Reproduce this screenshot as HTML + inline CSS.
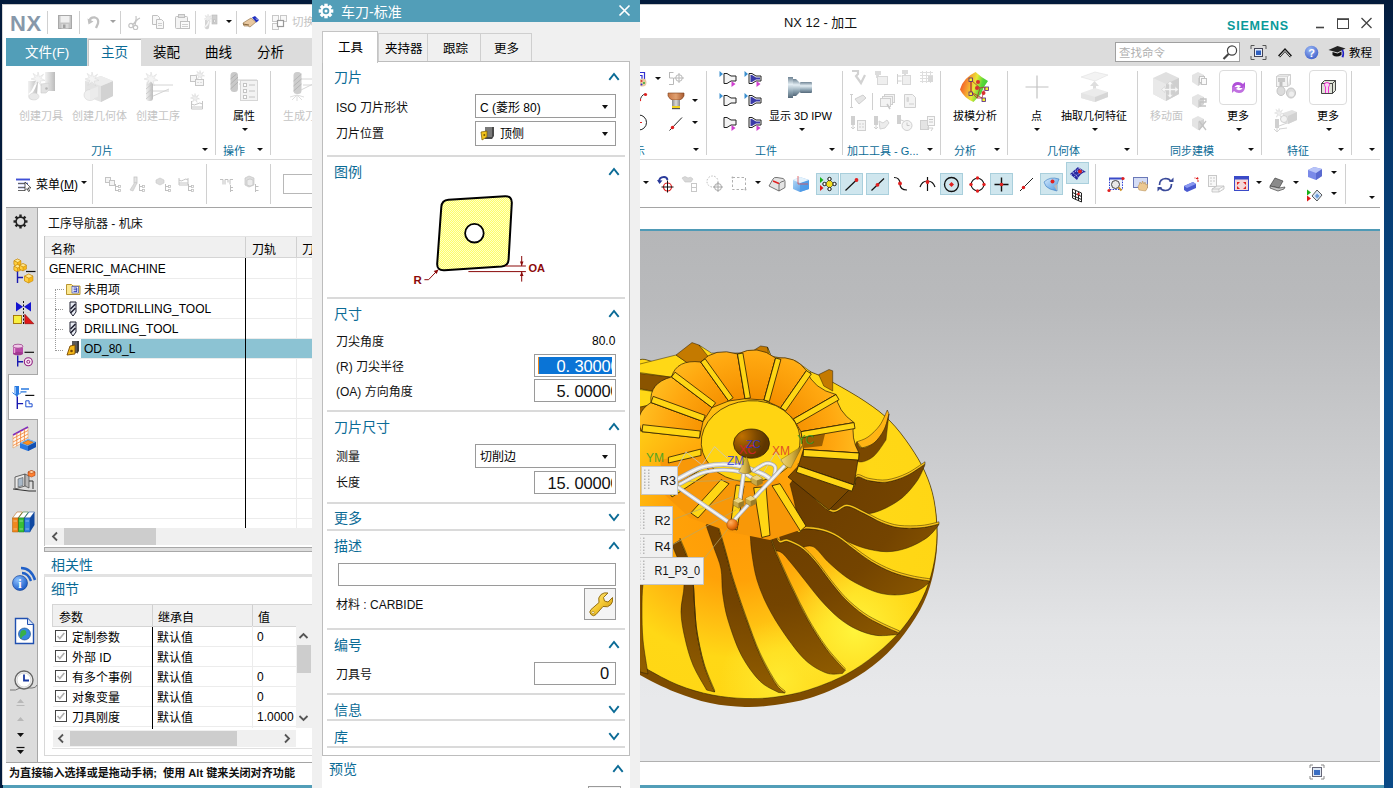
<!DOCTYPE html>
<html lang="zh-CN">
<head>
<meta charset="utf-8">
<title>NX 12 - 加工</title>
<style>
*{box-sizing:border-box;margin:0;padding:0}
html,body{width:1393px;height:788px;overflow:hidden}
body{position:relative;background:#031b3c;font-family:"Liberation Sans","Noto Sans CJK SC",sans-serif;font-size:12px;color:#000;line-height:1}
.a{position:absolute}
.t{position:absolute;white-space:nowrap;line-height:1}
.cj{margin-top:2px}
.la{margin-top:1px}
.sec.cj{margin-top:1px}
.blue{color:#0b6b96}
.dis{color:#c4c4c4}
.vsep{position:absolute;width:1px;background:#d0d0d0}
.hl{position:absolute;height:1px;background:#d4d4d4}
.dd{position:absolute;width:0;height:0;border-left:3px solid transparent;border-right:3px solid transparent;border-top:3.500px solid #111}
.dd.big{border-left-width:3.500px;border-right-width:3.500px;border-top-width:4px}
.box{position:absolute;border:1px solid #9a9a9a;background:#fff}
.sec{position:absolute;left:334px;font-size:14px;color:#0b6b96;white-space:nowrap;line-height:1}
.lbl{position:absolute;left:336px;font-size:12px;white-space:nowrap;line-height:1;color:#111}
.num{position:absolute;font-family:"Liberation Sans",sans-serif;font-size:16.5px;line-height:1;white-space:nowrap;letter-spacing:-0.17px}
.num i{display:inline-block;width:9px;font-style:normal;letter-spacing:0}
.tog{position:absolute;background:#cfe6ee;border:1px solid #a9cfdc}
</style>
</head>
<body>
<!-- desktop right strip -->
<div class="a" style="left:1384px;top:0;width:9px;height:788px;background:linear-gradient(180deg,#031b3c 0,#06386c 18%,#0a4f8f 50%,#0a4a86 100%)"></div>
<!-- main window -->
<div id="win" class="a" style="left:2px;top:4px;width:1382px;height:781px;background:#fff;border-top:1px solid #c9c9c9;border-left:1px solid #d8d8d8"></div>
<div class="a" style="left:3px;top:785px;width:1381px;height:3px;background:#529eb8"></div>

<!-- TITLE BAR -->
<div id="titlebar">
<div class="t la" style="left:10px;top:12px;font-size:22px;font-weight:bold;color:#8798aa;letter-spacing:0.5px">NX</div>
<div class="vsep" style="left:47px;top:11px;height:23px"></div>
<div class="vsep" style="left:79px;top:11px;height:23px"></div>
<div class="vsep" style="left:120px;top:11px;height:23px"></div>
<div class="vsep" style="left:195px;top:11px;height:23px"></div>
<div class="vsep" style="left:236px;top:11px;height:23px"></div>
<div class="vsep" style="left:265px;top:11px;height:23px"></div>
<div class="t cj" style="left:784px;top:15px;font-size:12.9px;color:#111">NX 12 - 加工</div>
<div class="t la" style="left:1227px;top:19px;font-size:12.5px;font-weight:bold;color:#0a9a9a;letter-spacing:0.8px">SIEMENS</div>
</div>

<!-- TAB BAR -->
<div class="a" style="left:6px;top:38px;width:1374px;height:28px;background:#dcdcdc"></div>
<div class="a" style="left:6px;top:38px;width:81px;height:28px;background:#529eb8"></div>
<div class="t cj" style="left:25px;top:44px;font-size:13.5px;color:#fff">文件(F)</div>
<div class="a" style="left:88px;top:39px;width:53px;height:27px;background:#fff;border-top:1px solid #b5b5b5;border-left:1px solid #c8c8c8"></div>
<div class="t blue cj" style="left:101px;top:44px;font-size:13.5px">主页</div>
<div class="t cj" style="left:153px;top:44px;font-size:13.5px">装配</div>
<div class="t cj" style="left:205px;top:44px;font-size:13.5px">曲线</div>
<div class="t cj" style="left:257px;top:44px;font-size:13.5px">分析</div>

<!--titlebar2-S--><svg class="a" style="left:58px;top:15px" width="15" height="15" viewBox="0 0 15 15"><rect x="0.500" y="0.500" width="13" height="13" fill="#c4c4c4" stroke="#a8a8a8"/><rect x="2.500" y="1" width="9" height="6.500" fill="#f0f0f0"/><rect x="3.500" y="9" width="7" height="4.500" fill="#d8d8d8"/><rect x="5" y="9.500" width="2.500" height="3.500" fill="#a0a0a0"/></svg>
<svg class="a" style="left:87px;top:15px" width="15" height="15" viewBox="0 0 15 15"><path d="M2 7q1-5 6-4.500q4 1 3 6l-2 4.500" fill="none" stroke="#c0c0c0" stroke-width="2.300"/><path d="M0.500 3.500l1 6l5-3z" fill="#c0c0c0"/></svg>
<div class="dd" style="left:109.5px;top:19.75px;border-top-color:#a0a0a0"></div>
<svg class="a" style="left:128px;top:15px" width="16" height="15" viewBox="0 0 16 15"><path d="M8 1q1 6-4 9M12 3q-5 2-5 8" fill="none" stroke="#c4c4c4" stroke-width="1.200"/><circle cx="3" cy="10.500" r="2.200" fill="none" stroke="#c4c4c4" stroke-width="1.200"/><circle cx="7.500" cy="12.500" r="2.200" fill="none" stroke="#c4c4c4" stroke-width="1.200"/></svg>
<svg class="a" style="left:151px;top:15px" width="15" height="15" viewBox="0 0 15 15"><path d="M1.500 0.500h5l2 2v7h-7z" fill="#f8f8f8" stroke="#c0c0c0"/><path d="M5.500 4.500h5l2 2v7h-7z" fill="#f8f8f8" stroke="#c0c0c0"/><path d="M7 8.500h4M7 10.500h4" stroke="#d0d0d0"/></svg>
<svg class="a" style="left:174px;top:14px" width="17" height="16" viewBox="0 0 17 16"><rect x="1.500" y="2.500" width="12" height="12" rx="1" fill="#f4f4f4" stroke="#c0c0c0"/><rect x="4.500" y="0.500" width="6" height="3" fill="#e0e0e0" stroke="#c0c0c0"/><rect x="6.500" y="7.500" width="9" height="7" fill="#fbfbfb" stroke="#c0c0c0"/><path d="M8 10.500h6M8 12.500h6" stroke="#d0d0d0"/></svg>
<svg class="a" style="left:203px;top:14px" width="17" height="17" viewBox="0 0 17 17"><rect x="9" y="1" width="5" height="9" fill="#d0d0d0" stroke="#b8b8b8" stroke-width="0.600"/><rect x="10.500" y="6" width="2" height="2" fill="#fff" stroke="#a8a8a8" stroke-width="0.500"/><path d="M2 6h5l-1 8q-1 2-3 1q-2-1-1-4z" fill="#d4d4d4"/><path d="M2 13q3-2 4-6" stroke="#f4f4f4" stroke-width="1.500" fill="none"/><path d="M5 0l0.800 2.500l2.500-1l-1.200 2.300l2.400 1l-2.600 0.600l0.500 2.600l-2-1.800l-1.800 2l0.200-2.700l-2.600-0.400l2.200-1.400l-1.400-2.200l2.500 0.800z" fill="#ececec" stroke="#cfcfcf" stroke-width="0.300"/></svg>
<div class="dd" style="left:225.5px;top:19.75px"></div>
<svg class="a" style="left:242px;top:15px" width="18" height="13" viewBox="0 0 18 13"><path d="M1 8l8-5l5 4l-6 5l-2-1l-4 0z" fill="#e8c8a0" stroke="#8a6a40" stroke-width="0.600"/><path d="M1 9l6 1" stroke="#6a4a20" stroke-width="0.800"/><path d="M10 2.500l3-1.500l4 4l-2.500 2.500z" fill="#2030c0"/><path d="M14 3.500l1.500 1.500" stroke="#fff" stroke-width="0.800"/></svg>
<svg class="a" style="left:271px;top:14px" width="17" height="17" viewBox="0 0 17 17"><rect x="1.500" y="1.500" width="6" height="6" fill="#f8f8f8" stroke="#c8c8c8"/><rect x="9.500" y="1.500" width="6" height="6" fill="#f8f8f8" stroke="#c8c8c8"/><rect x="1.500" y="9.500" width="6" height="6" fill="#f8f8f8" stroke="#c8c8c8"/><rect x="6.500" y="6.500" width="6" height="6" fill="#fff" stroke="#999" stroke-width="1.200"/></svg>
<div class="t dis cj" style="left:292px;top:15px;font-size:11.5px;">切换窗口</div>
<svg class="a" style="left:1314px;top:15px" width="62" height="16" viewBox="0 0 62 16"><path d="M2 12.500h8" stroke="#444" stroke-width="1.600"/><rect x="23.500" y="4" width="11" height="9.500" fill="none" stroke="#444" stroke-width="1"/><path d="M23 4.200h12" stroke="#444" stroke-width="1.600"/><path d="M47.500 3l10 10M57.500 3l-10 10" stroke="#444" stroke-width="1.300"/></svg>
<div class="box" style="left:1115px;top:42px;width:125px;height:20px;border-color:#a0a0a0"></div>
<div class="t cj" style="left:1119px;top:46px;font-size:11.5px;color:#b0b0b0">查找命令</div>
<svg class="a" style="left:1222px;top:44px" width="17" height="17" viewBox="0 0 17 17"><circle cx="10" cy="6.500" r="4.600" fill="#fff" stroke="#444" stroke-width="1.200"/><path d="M6.500 10L1.500 15" stroke="#444" stroke-width="2.200"/></svg>
<svg class="a" style="left:1250px;top:44px" width="17" height="17" viewBox="0 0 17 17"><path d="M1 5V1.500h3.500M12.500 1.500H16V5M16 12v3.500h-3.500M4.500 15.500H1V12" fill="none" stroke="#555" stroke-width="1"/><rect x="4.500" y="4.500" width="8" height="8" fill="#e4ecf8" stroke="#445" stroke-width="1"/><rect x="6" y="6.500" width="5" height="4.500" fill="#2f5fc0"/></svg>
<svg class="a" style="left:1277px;top:46px" width="16" height="13" viewBox="0 0 16 13"><path d="M2 10.500L8 4L14 10.500" fill="none" stroke="#111" stroke-width="2.600"/><path d="M2.500 10.500L8 4.500L13.500 10.500" fill="none" stroke="#fff" stroke-width="0.900"/></svg>
<svg class="a" style="left:1304px;top:45px" width="15" height="15" viewBox="0 0 15 15"><defs><radialGradient id="gH" cx="0.400" cy="0.300" r="0.800"><stop offset="0" stop-color="#9ab8f4"/><stop offset="1" stop-color="#3a5ac8"/></radialGradient></defs><circle cx="7.500" cy="7.500" r="6.800" fill="url(#gH)"/><text x="7.500" y="11.500" font-size="11" font-weight="bold" fill="#fff" text-anchor="middle" font-family="Liberation Sans, sans-serif">?</text></svg>
<svg class="a" style="left:1328px;top:45px" width="19" height="14" viewBox="0 0 19 14"><path d="M0.500 5l9-4l8 2.500l-8 4z" fill="#222"/><path d="M4.500 7v3q4 3 9 0v-3.500l-4 2z" fill="#111"/><path d="M15 4.500q2 3 0.500 8l-2-0.500q2-4 0-7z" fill="#2020c8"/></svg>
<div class="t cj" style="left:1349px;top:46px;font-size:11.5px;">教程</div><!--titlebar2-E-->

<!-- RIBBON placeholder -->
<!--ribbon-S--><svg class="a" style="left:27px;top:71px" width="30" height="31" viewBox="0 0 30 31"><defs><linearGradient id="gA" x1="0" x2="1"><stop offset="0" stop-color="#f2f2f2"/><stop offset="1" stop-color="#bcbcbc"/></linearGradient></defs><rect x="18" y="1" width="10" height="19" fill="url(#gA)"/><path d="M14 13l8-1v7l-3 3h-5z" fill="#e2e2e2" stroke="#cfcfcf" stroke-width="0.600"/><circle cx="19.500" cy="17.500" r="1.300" fill="#b5b5b5"/><path d="M1 10h10l-1 14q1 5-4 5q-5 0-5-4z" fill="url(#gA)"/><path d="M2 24q4-3 7-12" stroke="#fff" stroke-width="2.200" fill="none"/><ellipse cx="7" cy="25.500" rx="5" ry="3.500" fill="#e9e9e9" stroke="#d0d0d0" stroke-width="0.500"/><path d="M11 1L12.4 5.9L16.6 3.1L13.8 7.3L18 9.4L13.1 10.1L14.5 15L11 10.8L6.8 14.3L8.9 9.4L4 8L8.2 6.6L6.1 2.4L10.3 5.2Z" fill="#f4f4f4" stroke="#d0d0d0" stroke-width="0.400"/></svg>
<div class="t dis cj" style="left:19px;top:109px;font-size:11px;">创建刀具</div>
<svg class="a" style="left:83px;top:71px" width="32" height="32" viewBox="0 0 32 32"><path d="M2 10l16-5l12 5v15l-12 6l-16-6z" fill="#e3e3e3"/><path d="M18 15l12-5v15l-12 6z" fill="#d2d2d2"/><path d="M2 10l16 5l12-5l-12-5z" fill="#ededed"/><ellipse cx="7" cy="24" rx="6" ry="5.500" fill="#f0f0f0" stroke="#d5d5d5" stroke-width="0.600"/><path d="M7 18.500l8-3v10l-8 4z" fill="#ebebeb"/><path d="M9 1L10.4 5.9L14.6 3.1L11.8 7.3L16 9.4L11.1 10.1L12.5 15L9 10.8L4.8 14.3L6.9 9.4L2 8L6.2 6.6L4.1 2.4L8.3 5.2Z" fill="#f4f4f4" stroke="#d0d0d0" stroke-width="0.400"/></svg>
<div class="t dis cj" style="left:72px;top:109px;font-size:11px;">创建几何体</div>
<svg class="a" style="left:143px;top:71px" width="32" height="32" viewBox="0 0 32 32"><path d="M10 14h20M10 20h16M8 26l18-8" stroke="#d4d4d4" stroke-width="1"/><rect x="3" y="10" width="7" height="20" rx="3" fill="url(#gA)"/><path d="M3 28l7-6M3 23l7-6M3 18l7-6" stroke="#c4c4c4" stroke-width="0.800"/><path d="M8 1L9.4 5.9L13.6 3.1L10.8 7.3L15 9.4L10.1 10.1L11.5 15L8 10.8L3.8 14.3L5.9 9.4L1 8L5.2 6.6L3.1 2.4L7.3 5.2Z" fill="#f4f4f4" stroke="#d0d0d0" stroke-width="0.400"/></svg>
<div class="t dis cj" style="left:136px;top:109px;font-size:11px;">创建工序</div>
<svg class="a" style="left:189px;top:70px" width="16" height="17" viewBox="0 0 16 17"><rect x="1.500" y="5.500" width="6" height="6" fill="#f6f6f6" stroke="#c6c6c6"/><rect x="6.500" y="9.500" width="8" height="6" fill="#f6f6f6" stroke="#c6c6c6"/><path d="M8.500 12.500h1M11.500 12.500h1" stroke="#c6c6c6"/><path d="M11 0.5L11.9 3.7L14.6 1.9L12.8 4.5L15.5 5.9L12.3 6.3L13.2 9.5L11 6.8L8.3 9.1L9.7 5.9L6.5 5L9.2 4.1L7.8 1.4L10.6 3.2Z" fill="#eee" stroke="#d0d0d0" stroke-width="0.400"/></svg>
<svg class="a" style="left:189px;top:93px" width="16" height="17" viewBox="0 0 16 17"><path d="M2.500 8v8h11v-8M2.500 11q2.800 2 5.500 0q2.800-2 5.500 0M2.500 14h11" fill="none" stroke="#c6c6c6"/><path d="M6 0.5L6.9 3.7L9.6 1.9L7.8 4.5L10.5 5.9L7.3 6.3L8.2 9.5L6 6.8L3.3 9.1L4.7 5.9L1.5 5L4.2 4.1L2.9 1.4L5.5 3.2Z" fill="#eee" stroke="#d0d0d0" stroke-width="0.400"/></svg>
<div class="t blue cj" style="left:91px;top:144px;font-size:11px;">刀片</div>
<div class="dd" style="left:201.5px;top:147.75px"></div>
<div class="vsep" style="left:215px;top:71px;height:84px"></div>
<svg class="a" style="left:229px;top:71px" width="31" height="31" viewBox="0 0 31 31"><path d="M8 9h20M10 13h18" stroke="#d0d0d0"/><rect x="11.500" y="9.500" width="17" height="20" fill="#f3f3f3" stroke="#d6d6d6"/><rect x="14.500" y="12.500" width="3" height="3" fill="#fff" stroke="#c4c4c4"/><rect x="14.500" y="18.500" width="3" height="3" fill="#fff" stroke="#c4c4c4"/><rect x="14.500" y="24.500" width="3" height="3" fill="#fff" stroke="#c4c4c4"/><path d="M20 14h6M20 20h6M20 26h6" stroke="#c4c4c4"/><rect x="1.500" y="1" width="7.500" height="20" rx="3.500" fill="#c9c9c9"/><path d="M1.500 18l7.500-7M1.500 13l7.500-7M1.500 8l6-5" stroke="#aeaeae" stroke-width="0.900"/></svg>
<div class="t cj" style="left:233px;top:109px;font-size:11px;">属性</div>
<div class="dd" style="left:241.5px;top:127.75px"></div>
<div class="t blue cj" style="left:223px;top:144px;font-size:11px;">操作</div>
<div class="dd" style="left:256.5px;top:147.75px"></div>
<div class="vsep" style="left:270px;top:71px;height:84px"></div>
<svg class="a" style="left:289px;top:71px" width="26" height="32" viewBox="0 0 26 32"><path d="M12 8h14M14 14h12M10 20l16-8" stroke="#d6d6d6"/><rect x="4.500" y="1" width="8" height="22" rx="3.500" fill="#cdcdcd"/><path d="M4.500 20l8-7M4.500 15l8-7M4.500 10l8-7" stroke="#b3b3b3" stroke-width="0.900"/><path d="M8 24l-7 2M8 24l-5 5M8 24l0 6M8 24l5 5M8 24l7 2" stroke="#dedede" stroke-width="1"/></svg>
<div class="t dis cj" style="left:283px;top:109px;font-size:11px;">生成刀轨</div>
<svg class="a" style="left:640px;top:70px" width="8" height="18" viewBox="0 0 8 18"><path d="M0 2.500h4.500v9M0 5.500h2v6" fill="none" stroke="#3030d0" stroke-width="1.200"/><circle cx="2.500" cy="12.500" r="4" fill="#e8c9a0"/><circle cx="1.500" cy="11" r="1" fill="#d33"/><circle cx="4" cy="13" r="1" fill="#3a3"/><circle cx="1.500" cy="14.500" r="1" fill="#33c"/></svg>
<div class="dd" style="left:654.5px;top:76.75px"></div>
<svg class="a" style="left:668px;top:71px" width="17" height="15" viewBox="0 0 17 15"><path d="M1 1.500h4.500M1.500 1.500v5.500h4v6.500h-4.500M11 2v10M6 7h10" fill="none" stroke="#b8b8b8" stroke-width="1"/><circle cx="11" cy="7" r="3.300" fill="none" stroke="#b8b8b8"/></svg>
<svg class="a" style="left:640px;top:92px" width="8" height="12" viewBox="0 0 8 12"><path d="M0 9q1-6 5-7" fill="none" stroke="#333" stroke-width="1"/><circle cx="5.500" cy="2.500" r="1.600" fill="#e02020"/><circle cx="0" cy="8" r="1.200" fill="#e02020"/></svg>
<svg class="a" style="left:667px;top:92px" width="18" height="18" viewBox="0 0 18 18"><defs><linearGradient id="gB" x1="0" x2="1"><stop offset="0" stop-color="#c87848"/><stop offset="0.500" stop-color="#e0a070"/><stop offset="1" stop-color="#a85a30"/></linearGradient><linearGradient id="gC" x1="0" x2="1"><stop offset="0" stop-color="#8a8a8a"/><stop offset="0.500" stop-color="#d8d8d8"/><stop offset="1" stop-color="#8a8a8a"/></linearGradient></defs><path d="M1 1h16v3q-2 4-5 4h-6q-3 0-5-4z" fill="url(#gB)" stroke="#7a3c18" stroke-width="0.600"/><rect x="5" y="8" width="8" height="6" fill="url(#gC)"/><rect x="5" y="14" width="8" height="2" fill="#f2d21a"/><rect x="5" y="16" width="8" height="1.200" fill="#555"/></svg>
<div class="dd" style="left:691.5px;top:98.75px"></div>
<svg class="a" style="left:640px;top:114px" width="8" height="18" viewBox="0 0 8 18"><circle cx="-1" cy="8.500" r="7.500" fill="none" stroke="#222" stroke-width="1"/><path d="M-2 8.500h4" stroke="#e02020"/></svg>
<svg class="a" style="left:668px;top:116px" width="16" height="16" viewBox="0 0 16 16"><path d="M1.500 14.500L14 1.500" stroke="#222" stroke-width="1"/><circle cx="4.500" cy="11.500" r="1.700" fill="#e02020"/></svg>
<div class="dd" style="left:691.5px;top:120.75px"></div>
<div class="t blue cj" style="left:634px;top:144px;font-size:11px;clip-path:inset(0 0 0 6px)">示</div>
<div class="dd" style="left:692.5px;top:147.75px"></div>
<div class="vsep" style="left:706px;top:71px;height:84px"></div>
<svg class="a" style="left:719px;top:70px" width="18" height="18" viewBox="0 0 18 18"><path d="M5 3.500h3l4 2.500h5v5h-5l-4 2.500h-3z" fill="#f4f4f4" stroke="#222" stroke-width="1"/><path d="M0.500 1l3.500 3l-3.500 3z" fill="#3a8fd0"/><path d="M12.500 11l4 3l-4 3z" fill="#d040d0"/></svg>
<svg class="a" style="left:744px;top:70px" width="18" height="18" viewBox="0 0 18 18"><path d="M5 3.500h3l4 2.500h5v5h-5l-4 2.500h-3z" fill="#f4f4f4" stroke="#222" stroke-width="1"/><path d="M6.500 5h1.500l4 2.500h4v2h-4l-4 2.500h-1.500z" fill="#3a3aa8"/><path d="M0.500 1l3.500 3l-3.500 3z" fill="#3a8fd0"/><path d="M12.500 11l4 3l-4 3z" fill="#d040d0"/></svg>
<svg class="a" style="left:719px;top:92px" width="18" height="18" viewBox="0 0 18 18"><path d="M5 3.500h3l4 2.500h5v5h-5l-4 2.500h-3z" fill="#f4f4f4" stroke="#222" stroke-width="1"/><path d="M0.500 1l3.500 3l-3.500 3z" fill="#3a8fd0"/></svg>
<svg class="a" style="left:744px;top:92px" width="18" height="18" viewBox="0 0 18 18"><path d="M5 3.500h3l4 2.500h5v5h-5l-4 2.500h-3z" fill="#f4f4f4" stroke="#222" stroke-width="1"/><path d="M6.500 5h1.500l4 2.500h4v2h-4l-4 2.500h-1.500z" fill="#3a3aa8"/><path d="M0.500 1l3.500 3l-3.500 3z" fill="#3a8fd0"/></svg>
<svg class="a" style="left:719px;top:114px" width="18" height="18" viewBox="0 0 18 18"><path d="M5 3.500h3l4 2.500h5v5h-5l-4 2.500h-3z" fill="#f4f4f4" stroke="#222" stroke-width="1"/><path d="M12.500 11l4 3l-4 3z" fill="#d040d0"/></svg>
<svg class="a" style="left:744px;top:114px" width="18" height="18" viewBox="0 0 18 18"><path d="M5 3.500h3l4 2.500h5v5h-5l-4 2.500h-3z" fill="#f4f4f4" stroke="#222" stroke-width="1"/><path d="M6.500 5h1.500l4 2.500h4v2h-4l-4 2.500h-1.500z" fill="#3a3aa8"/><path d="M12.500 11l4 3l-4 3z" fill="#d040d0"/></svg>
<svg class="a" style="left:787px;top:76px" width="27" height="24" viewBox="0 0 27 24"><defs><linearGradient id="gD" x1="0" y1="0" x2="0" y2="1"><stop offset="0" stop-color="#6f8494"/><stop offset="0.350" stop-color="#e4eef4"/><stop offset="0.700" stop-color="#8fa5b3"/><stop offset="1" stop-color="#55697a"/></linearGradient></defs><rect x="1" y="1" width="5" height="21" fill="url(#gD)"/><path d="M6 3h3q3 3 4 4v9q-1 1-4 4h-3z" fill="url(#gD)"/><rect x="13" y="6" width="12" height="11" rx="1" fill="url(#gD)"/></svg>
<div class="t cj" style="left:769px;top:109px;font-size:11px;">显示 3D IPW</div>
<div class="dd" style="left:798.5px;top:127.75px"></div>
<div class="t blue cj" style="left:755px;top:144px;font-size:11px;">工件</div>
<div class="dd" style="left:828.5px;top:147.75px"></div>
<div class="vsep" style="left:842px;top:71px;height:84px"></div>
<svg class="a" style="left:850px;top:70px" width="17" height="17" viewBox="0 0 17 17"><path d="M2 1h6v3l-2 2l5 7l4-8" fill="none" stroke="#d2d2d2" stroke-width="2.200"/></svg>
<svg class="a" style="left:873px;top:70px" width="17" height="17" viewBox="0 0 17 17"><path d="M2 1h6v4h-2v3h-3v-3h-1z" fill="#dcdcdc"/><rect x="4.500" y="6.500" width="10" height="8" fill="#efefef" stroke="#d8d8d8"/></svg>
<svg class="a" style="left:896px;top:70px" width="17" height="17" viewBox="0 0 17 17"><path d="M6 0h6v4h-2v3h-2v-3h-2z" fill="#dcdcdc"/><rect x="6.500" y="5.500" width="8" height="9" fill="#efefef" stroke="#d8d8d8"/><path d="M1.500 4v10M1.500 6h4M1.500 11h4" stroke="#d0d0d0"/></svg>
<svg class="a" style="left:919px;top:70px" width="17" height="17" viewBox="0 0 17 17"><path d="M1 2.500h13M1 5.500h13M1 8.500h13M1 11.500h13M3.500 1v12M7.500 1v12M11.500 1v12" stroke="#dedede"/><rect x="9" y="6" width="5" height="6" fill="#d8d8d8"/></svg>
<svg class="a" style="left:850px;top:93px" width="17" height="17" viewBox="0 0 17 17"><path d="M1.500 1v14M0 1.500h3M0 14.500h3" stroke="#cfcfcf"/><path d="M5 6l8-4l3 3l-7 6z" fill="#e6e6e6" stroke="#cfcfcf"/></svg>
<div class="vsep" style="left:872px;top:93px;height:17px"></div>
<svg class="a" style="left:879px;top:93px" width="17" height="17" viewBox="0 0 17 17"><rect x="5.500" y="1.500" width="10" height="8" fill="#f3f3f3" stroke="#d0d0d0"/><rect x="3.500" y="3.500" width="10" height="8" fill="#f3f3f3" stroke="#d0d0d0"/><rect x="1.500" y="5.500" width="10" height="8" fill="#f3f3f3" stroke="#d0d0d0"/><path d="M8 11l3 5" stroke="#c8c8c8" stroke-width="1.500"/></svg>
<svg class="a" style="left:903px;top:93px" width="17" height="17" viewBox="0 0 17 17"><path d="M1.500 1.500h8l3 3v10h-11z" fill="#f3f3f3" stroke="#d0d0d0"/><rect x="3.500" y="4" width="2.500" height="5" rx="1" fill="#d8d8d8"/><path d="M6 11h5" stroke="#cfcfcf"/></svg>
<svg class="a" style="left:850px;top:115px" width="17" height="17" viewBox="0 0 17 17"><rect x="1" y="1" width="4" height="9" fill="#d0d0d0"/><path d="M3 10v3M1 12l2 2l2-2" stroke="#d0d0d0" fill="none"/><rect x="7.500" y="5.500" width="8" height="10" fill="#f3f3f3" stroke="#d0d0d0"/><path d="M9 9h2M12 9h2M9 12h2M12 12h2" stroke="#cfcfcf"/></svg>
<svg class="a" style="left:873px;top:115px" width="17" height="17" viewBox="0 0 17 17"><rect x="1" y="1" width="4" height="9" fill="#d0d0d0"/><path d="M3 10v3M1 12l2 2l2-2" stroke="#d0d0d0" fill="none"/><path d="M6 6l4 2l4-3l2 3l-4 5l-5 1z" fill="#ececec" stroke="#d4d4d4"/></svg>
<svg class="a" style="left:896px;top:115px" width="17" height="17" viewBox="0 0 17 17"><rect x="1" y="0" width="4" height="9" fill="#d0d0d0"/><path d="M5 5l5 2" stroke="#d0d0d0"/><circle cx="11" cy="10.500" r="5" fill="#f3f3f3" stroke="#d0d0d0"/><path d="M11 7.500v3h2.500" stroke="#c8c8c8" fill="none"/></svg>
<svg class="a" style="left:919px;top:115px" width="17" height="17" viewBox="0 0 17 17"><rect x="1.500" y="5.500" width="8" height="9" fill="#e4e4e4" stroke="#cfcfcf"/><rect x="8.500" y="1.500" width="7" height="9" fill="#f7f7f7" stroke="#cfcfcf"/><path d="M10 4.500h4M10 7h4" stroke="#c8c8c8"/><path d="M8 13h6l-2 3" fill="none" stroke="#d0d0d0"/></svg>
<div class="t blue cj" style="left:847px;top:144px;font-size:11px;">加工工具 - G...</div>
<div class="dd" style="left:926.5px;top:147.75px"></div>
<div class="vsep" style="left:940px;top:71px;height:84px"></div>
<svg class="a" style="left:958px;top:71px" width="34" height="32" viewBox="0 0 34 32"><defs><linearGradient id="gE" x1="0" y1="0.300" x2="1" y2="0.600"><stop offset="0" stop-color="#f04a28"/><stop offset="0.300" stop-color="#f6a030"/><stop offset="0.520" stop-color="#e8e838"/><stop offset="0.750" stop-color="#58d838"/><stop offset="1" stop-color="#38c838"/></linearGradient></defs><path d="M17.600 1Q24 7 30 10Q25 16 23 23L15.500 31Q6 27 2 18.500Q5 7 17.600 1Z" fill="url(#gE)"/><path d="M13 9l9 8l-3 10l-6-6zM13 9v12M22 17l5-1l-3 11l-5 0M13 21l11 6" fill="none" stroke="#b03030" stroke-width="0.800"/><circle cx="20" cy="11" r="2" fill="#d83030"/><circle cx="19" cy="17" r="2" fill="#d83030"/><circle cx="25.500" cy="22" r="2" fill="#d83030"/><g fill="#f4f428" stroke="#502080" stroke-width="0.800"><rect x="11" y="7" width="3.500" height="3.500"/><rect x="11" y="21" width="3.500" height="3.500"/><rect x="27" y="16" width="3.500" height="3.500"/><rect x="24" y="27" width="3.500" height="3.500"/></g></svg>
<div class="t cj" style="left:953px;top:109px;font-size:11px;">拔模分析</div>
<div class="dd" style="left:972.5px;top:127.75px"></div>
<div class="t blue cj" style="left:954px;top:144px;font-size:11px;">分析</div>
<div class="dd" style="left:993.5px;top:147.75px"></div>
<div class="vsep" style="left:1007px;top:71px;height:84px"></div>
<svg class="a" style="left:1025px;top:75px" width="24" height="24" viewBox="0 0 24 24"><path d="M12 0.500v23M0.500 12h23" stroke="#c2c2c2" stroke-width="1.200"/></svg>
<div class="t cj" style="left:1031px;top:109px;font-size:11px;">点</div>
<div class="dd" style="left:1033.5px;top:127.75px"></div>
<svg class="a" style="left:1080px;top:71px" width="29" height="32" viewBox="0 0 29 32"><path d="M1 6l14-5l13 3l-13 6z" fill="#f3f3f3" stroke="#e0e0e0" stroke-width="0.600"/><path d="M14.500 10l-4.500 5h3v6h3v-6h3z" fill="#dedede"/><path d="M1 22l14-5l13 4v5l-13 5l-14-4z" fill="#ebebeb"/><path d="M15 26l13-5v5l-13 5z" fill="#d6d6d6"/><path d="M1 22l14 4v5l-14-4z" fill="#e4e4e4"/></svg>
<div class="t cj" style="left:1061px;top:109px;font-size:11px;">抽取几何特征</div>
<div class="dd" style="left:1091.5px;top:127.75px"></div>
<div class="t blue cj" style="left:1047px;top:144px;font-size:11px;">几何体</div>
<div class="dd" style="left:1123.5px;top:147.75px"></div>
<div class="vsep" style="left:1137px;top:71px;height:84px"></div>
<svg class="a" style="left:1151px;top:71px" width="32" height="32" viewBox="0 0 32 32"><path d="M15 1l13 6v16l-13 7l-13-7v-16z" fill="#e0e0e0"/><path d="M15 13l13-6v16l-13 7z" fill="#cfcfcf"/><path d="M2 7l13 6v17l-13-7z" fill="#e9e9e9"/><path d="M19 10l3 3.500h-2v4h4v-2l3.500 3l-3.500 3v-2h-4v4h2l-3 3.500l-3-3.500h2v-4h-4v2l-3.500-3l3.500-3v2h4v-4h-2z" fill="#f6f6f6" stroke="#d2d2d2" stroke-width="0.700"/></svg>
<div class="t dis cj" style="left:1150px;top:109px;font-size:11px;">移动面</div>
<svg class="a" style="left:1191px;top:71px" width="17" height="17" viewBox="0 0 17 17"><path d="M7 1l6 3v7l-6 4l-6-4v-7z" fill="#e4e4e4"/><path d="M7 7l6-3v7l-6 4z" fill="#d2d2d2"/><rect x="8.500" y="5.500" width="5" height="6" fill="#fafafa" stroke="#c4c4c4"/><rect x="10.500" y="7.500" width="5" height="6" fill="#fafafa" stroke="#c4c4c4"/></svg>
<svg class="a" style="left:1191px;top:93px" width="17" height="17" viewBox="0 0 17 17"><path d="M7 1l6 3v7l-6 4l-6-4v-7z" fill="#e4e4e4"/><path d="M7 7l6-3v7l-6 4z" fill="#d2d2d2"/><path d="M9 6h6v3h-6v4h6" fill="none" stroke="#c4c4c4" stroke-width="1.400"/></svg>
<svg class="a" style="left:1191px;top:115px" width="17" height="17" viewBox="0 0 17 17"><path d="M7 1l6 3v7l-6 4l-6-4v-7z" fill="#e4e4e4"/><path d="M7 7l6-3v7l-6 4z" fill="#d2d2d2"/><path d="M8 6l7 9M15 6l-7 9" stroke="#c4c4c4" stroke-width="1.300"/></svg>
<div class="a" style="left:1219px;top:70px;width:38px;height:35px;border:1px solid #dcdcdc;border-radius:4px;background:#fff"></div>
<svg class="a" style="left:1230px;top:80px" width="17" height="15" viewBox="0 0 17 15"><path d="M2 7q1-5 6-5q3 0 5 2l2-2v6h-6l2-2q-2-1.500-4-1q-3 1-3 4z" fill="#b050d8"/><path d="M15 8q-1 5-6 5q-3 0-5-2l-2 2v-6h6l-2 2q2 1.500 4 1q3-1 3-4z" fill="#c070e0"/></svg>
<div class="t cj" style="left:1227px;top:109px;font-size:11px;">更多</div>
<div class="dd" style="left:1235.5px;top:127.75px"></div>
<div class="t blue cj" style="left:1170px;top:144px;font-size:11px;">同步建模</div>
<div class="dd" style="left:1247.5px;top:147.75px"></div>
<div class="vsep" style="left:1261px;top:71px;height:84px"></div>
<svg class="a" style="left:1273px;top:74px" width="25" height="25" viewBox="0 0 25 25"><rect x="3.500" y="2.500" width="11" height="10" fill="#f2f2f2" stroke="#d0d0d0"/><path d="M3.500 2.500l3-2h11l-3 2M17.500 0.500v10l-3 2" fill="#e6e6e6" stroke="#d0d0d0"/><rect x="5" y="4" width="7" height="4" fill="#c8c8c8"/><path d="M8 8v4" stroke="#c0c0c0" stroke-width="3"/><ellipse cx="8" cy="17" rx="4" ry="4.500" fill="#dcdcdc" stroke="#c4c4c4"/><ellipse cx="18" cy="19" rx="4.500" ry="5" fill="#dcdcdc" stroke="#c4c4c4"/><circle cx="18.500" cy="20" r="2.500" fill="#efefef"/></svg>
<svg class="a" style="left:1273px;top:108px" width="25" height="25" viewBox="0 0 25 25"><path d="M10 5l9-3l5 2v8l-9 4l-5-2z" fill="#e2e2e2"/><path d="M15 8l9-4v8l-9 4z" fill="#d2d2d2"/><circle cx="11" cy="11" r="3.500" fill="#f3f3f3" stroke="#d0d0d0"/><path d="M6 0.5L6.9 3.7L9.6 1.9L7.8 4.5L10.5 5.9L7.3 6.3L8.2 9.5L6 6.8L3.3 9.1L4.7 5.9L1.5 5L4.2 4.1L2.9 1.4L5.5 3.2Z" fill="#efefef" stroke="#d0d0d0" stroke-width="0.400"/><rect x="2" y="11" width="4" height="9" fill="#d0d0d0"/><path d="M4 20v3M1 21l3 3l3-3M6 18l8-3M6 21l8-1" stroke="#d4d4d4" fill="none"/></svg>
<div class="a" style="left:1309px;top:70px;width:38px;height:35px;border:1px solid #dcdcdc;border-radius:4px;background:#fff"></div>
<svg class="a" style="left:1320px;top:79px" width="17" height="17" viewBox="0 0 17 17"><path d="M1.500 4.500l3-3h11v10l-3 3h-11z" fill="#dfe3d8" stroke="#333" stroke-width="0.900"/><path d="M1.500 4.500h11v10M12.500 4.500l3-3" fill="none" stroke="#333" stroke-width="0.900"/><path d="M5.500 14v-6q-1-1-1-2.500q0-2 2.500-2t2.500 2q0 1.500-1 2.500v6" fill="#f6d6f0" stroke="#f020d0" stroke-width="0.900"/></svg>
<div class="t cj" style="left:1317px;top:109px;font-size:11px;">更多</div>
<div class="dd" style="left:1325.5px;top:127.75px"></div>
<div class="t blue cj" style="left:1287px;top:144px;font-size:11px;">特征</div>
<div class="dd" style="left:1337.5px;top:147.75px"></div>
<div class="vsep" style="left:1351px;top:71px;height:84px"></div>
<div class="dd" style="left:1368.5px;top:147.75px"></div><!--ribbon-E-->
<div class="hl" style="left:6px;top:159px;width:1374px;background:#d9d9d9"></div>
<!-- TOOLBAR2 placeholder -->
<!--tb2-S--><svg class="a" style="left:15px;top:177px" width="18" height="15" viewBox="0 0 18 15"><path d="M1 2.500h14M3 6.500h10M3 10.500h8" stroke="#5a6ad0" stroke-width="1.300"/><path d="M1 2.500h14" stroke="#4050d8" stroke-width="1.600"/><path d="M3 6.500h9M3 10.500h7M3 13.500h7" stroke="#666" stroke-width="1"/><path d="M10 5l0 8.500l2-2l1.500 3l1.200-0.600l-1.500-3h2.800z" fill="#fff" stroke="#333" stroke-width="0.800"/></svg>
<div class="t cj" style="left:36px;top:177px;font-size:12px;">菜单(<u>M</u>)</div>
<div class="dd" style="left:80.5px;top:181.25px"></div>
<div class="vsep" style="left:92px;top:164px;height:40px"></div>
<svg class="a" style="left:105px;top:176px" width="17" height="17" viewBox="0 0 17 17"><rect x="0.500" y="1.500" width="5" height="5" fill="#f4f4f4" stroke="#c4c4c4"/><rect x="4.500" y="4.500" width="5" height="5" fill="#f4f4f4" stroke="#c4c4c4"/><path d="M10.500 8v7M10.500 10.500h3M10.500 14.500h3" stroke="#c0c0c0" fill="none"/><rect x="13.500" y="9.500" width="2" height="2" fill="#fff" stroke="#c0c0c0" stroke-width="0.800"/><rect x="13.500" y="13.500" width="2" height="2" fill="#fff" stroke="#c0c0c0" stroke-width="0.800"/></svg>
<svg class="a" style="left:129px;top:176px" width="17" height="17" viewBox="0 0 17 17"><rect x="5" y="1" width="3" height="6" fill="#e6e6e6" stroke="#c4c4c4" stroke-width="0.800"/><path d="M1 14l5-8l2 1l-4 8z" fill="#dcdcdc" stroke="#c4c4c4" stroke-width="0.600"/><path d="M10.500 8v7M10.500 10.500h3M10.500 14.500h3" stroke="#c0c0c0" fill="none"/><rect x="13.500" y="9.500" width="2" height="2" fill="#fff" stroke="#c0c0c0" stroke-width="0.800"/><rect x="13.500" y="13.500" width="2" height="2" fill="#fff" stroke="#c0c0c0" stroke-width="0.800"/></svg>
<svg class="a" style="left:155px;top:176px" width="17" height="17" viewBox="0 0 17 17"><path d="M1 4l4-2l4 2v3l-4 2l-4-2z" fill="#dcdcdc" stroke="#c8c8c8" stroke-width="0.600"/><path d="M10.500 8v7M10.500 10.500h3M10.500 14.500h3" stroke="#c0c0c0" fill="none"/><rect x="13.500" y="9.500" width="2" height="2" fill="#fff" stroke="#c0c0c0" stroke-width="0.800"/><rect x="13.500" y="13.500" width="2" height="2" fill="#fff" stroke="#c0c0c0" stroke-width="0.800"/></svg>
<svg class="a" style="left:178px;top:176px" width="17" height="17" viewBox="0 0 17 17"><path d="M1 2v7h9v-7M1 4q2 2 4.500 0q2.500-2 4.500 0M1 7h9" fill="none" stroke="#c4c4c4"/><path d="M10.500 8v7M10.500 10.500h3M10.500 14.500h3" stroke="#c0c0c0" fill="none"/><rect x="13.500" y="9.500" width="2" height="2" fill="#fff" stroke="#c0c0c0" stroke-width="0.800"/><rect x="13.500" y="13.500" width="2" height="2" fill="#fff" stroke="#c0c0c0" stroke-width="0.800"/></svg>
<div class="vsep" style="left:206px;top:164px;height:40px"></div>
<svg class="a" style="left:219px;top:176px" width="17" height="17" viewBox="0 0 17 17"><path d="M1 3.500h3v5M6 8.500v-5h3v3M11 8.500v-5h3" fill="none" stroke="#c0c0c0"/><path d="M11.500 9v7M11.500 11.500h2.500M11.500 14.500h2.500" stroke="#c0c0c0" fill="none"/></svg>
<svg class="a" style="left:243px;top:175px" width="18" height="18" viewBox="0 0 18 18"><path d="M2 3l4-2l5 2v7l-5 2l-4-2z" fill="#dcdcdc" stroke="#c4c4c4" stroke-width="0.700"/><path d="M4 5l3-1l3 1v5l-3 1l-3-1z" fill="#ececec" stroke="#c4c4c4" stroke-width="0.700"/><path d="M12.500 9v8M12.500 11.500h3M12.500 15.500h3" stroke="#c0c0c0" fill="none"/></svg>
<div class="vsep" style="left:270px;top:164px;height:40px"></div>
<div class="box" style="left:283px;top:174px;width:40px;height:20px;border-color:#b8b8b8"></div>
<div class="dd" style="left:642.5px;top:181.25px"></div>
<svg class="a" style="left:657px;top:175px" width="17" height="18" viewBox="0 0 17 18"><path d="M2 7q0-5 5-5q3 0 3.500 3" fill="none" stroke="#2a3a9a" stroke-width="1.800"/><path d="M0 5l2.500 4l3-3.500z" fill="#2a3a9a"/><circle cx="10.500" cy="12" r="4" fill="none" stroke="#e02020" stroke-width="1.200"/><path d="M10.500 5.500v12M4.500 12h12" stroke="#111" stroke-width="1"/></svg>
<svg class="a" style="left:681px;top:175px" width="17" height="18" viewBox="0 0 17 18"><path d="M1 3q3-3 6 0q3-2 5 1l-2 3h-6z" fill="#d8d8d8" stroke="#c4c4c4" stroke-width="0.600"/><rect x="10.500" y="8.500" width="5" height="8" fill="none" stroke="#c8c8c8"/><path d="M10.500 12.500h5" stroke="#c8c8c8"/></svg>
<svg class="a" style="left:706px;top:175px" width="18" height="18" viewBox="0 0 18 18"><circle cx="6.500" cy="6.500" r="5.500" fill="none" stroke="#b8b8b8" stroke-dasharray="1.500 1.500"/><circle cx="12" cy="12" r="3.500" fill="none" stroke="#a8a8a8"/><path d="M12 7v10M7 12h10" stroke="#a8a8a8"/></svg>
<svg class="a" style="left:731px;top:176px" width="17" height="16" viewBox="0 0 17 16"><rect x="1.500" y="1.500" width="13" height="12" fill="none" stroke="#b0b0b0" stroke-dasharray="2.500 2"/><circle cx="1.500" cy="1.500" r="1" fill="#b0b0b0"/><circle cx="14.500" cy="13.500" r="1" fill="#b0b0b0"/></svg>
<div class="dd" style="left:754.5px;top:181.25px"></div>
<svg class="a" style="left:768px;top:176px" width="18" height="16" viewBox="0 0 18 16"><path d="M1 10l4-7q1-2 4-1.500l6 1q2 1 2 3v6l-6 3.500z" fill="#e4e4e4" stroke="#555" stroke-width="0.800"/><path d="M11 15v-6q0-2 2-3l3-1" fill="none" stroke="#555" stroke-width="0.800"/><path d="M5 5l6 2.500" stroke="#e02020" stroke-width="1.400"/></svg>
<svg class="a" style="left:792px;top:175px" width="18" height="18" viewBox="0 0 18 18"><defs><linearGradient id="gF" x1="0" x2="1" y1="0" y2="1"><stop offset="0" stop-color="#bfe0f8"/><stop offset="1" stop-color="#3a8ae0"/></linearGradient></defs><path d="M1 5l7-3l9 3v9l-9 3l-7-3z" fill="url(#gF)"/><path d="M8 8l9-3v9l-9 3z" fill="#4a9ae8" opacity="0.800"/><path d="M1 5l7 3l9-3l-9-3z" fill="#e4f2fc"/><path d="M6 1v8h10" fill="none" stroke="#e05050" stroke-width="0.800"/></svg>
<div class="tog" style="left:816px;top:173px;width:23px;height:22px"></div>
<svg class="a" style="left:819px;top:176px" width="18" height="17" viewBox="0 0 18 17"><path d="M1 1l3.500 3l-3.500 3z" fill="#18b018"/><path d="M1 9l3.500 3l-3.500 3z" fill="#e01818"/><path d="M10.500 3.500l4.500 4.500l-4.500 4.500l-4.500-4.500z" fill="#f4e020" stroke="#222" stroke-width="0.600"/><g fill="#fff" stroke="#111" stroke-width="1"><circle cx="10.500" cy="3" r="1.700"/><circle cx="10.500" cy="13" r="1.700"/><circle cx="5.500" cy="8" r="1.700"/><circle cx="15.500" cy="8" r="1.700"/></g></svg>
<div class="tog" style="left:840px;top:173px;width:23px;height:22px"></div>
<svg class="a" style="left:844px;top:177px" width="16" height="15" viewBox="0 0 16 15"><path d="M1.500 13.500L13 2.500" stroke="#111" stroke-width="1.200"/><circle cx="12.500" cy="3" r="1.900" fill="#e02020"/></svg>
<div class="tog" style="left:866px;top:173px;width:23px;height:22px"></div>
<svg class="a" style="left:870px;top:177px" width="16" height="15" viewBox="0 0 16 15"><path d="M1.500 13.500L14 1.500" stroke="#111" stroke-width="1.200"/><circle cx="7.500" cy="7.800" r="1.900" fill="#e02020"/></svg>
<svg class="a" style="left:893px;top:176px" width="16" height="16" viewBox="0 0 16 16"><path d="M1 1.500q6 0 6 6.500q0 6 7 6" fill="none" stroke="#111" stroke-width="1.200"/><circle cx="7" cy="7.500" r="1.900" fill="#e02020"/></svg>
<svg class="a" style="left:919px;top:176px" width="17" height="16" viewBox="0 0 17 16"><path d="M8.500 1v14M1 11q2-6 7.500-6q5.500 0 7.500 6" fill="none" stroke="#111" stroke-width="1.200"/><circle cx="8.500" cy="6" r="1.900" fill="#e02020"/></svg>
<div class="tog" style="left:940px;top:173px;width:23px;height:22px"></div>
<svg class="a" style="left:943px;top:176px" width="17" height="17" viewBox="0 0 17 17"><circle cx="8.500" cy="8.500" r="7" fill="none" stroke="#111" stroke-width="1.300"/><path d="M8.500 6l2.500 2.500l-2.500 2.500l-2.500-2.500z" fill="#e02020"/></svg>
<svg class="a" style="left:969px;top:176px" width="17" height="17" viewBox="0 0 17 17"><circle cx="8.500" cy="8.500" r="6.300" fill="none" stroke="#111" stroke-width="1.100"/><g fill="#e02020"><circle cx="8.500" cy="2" r="1.700"/><circle cx="8.500" cy="15" r="1.700"/><circle cx="2" cy="8.500" r="1.700"/><circle cx="15" cy="8.500" r="1.700"/></g></svg>
<div class="tog" style="left:990px;top:173px;width:23px;height:22px"></div>
<svg class="a" style="left:994px;top:177px" width="15" height="15" viewBox="0 0 15 15"><path d="M7.500 0.500v14M0.500 7.500h14" stroke="#111" stroke-width="1.400"/><circle cx="7.500" cy="7.500" r="1.800" fill="#e02020"/></svg>
<svg class="a" style="left:1019px;top:177px" width="15" height="15" viewBox="0 0 15 15"><path d="M1 14L14 1" stroke="#222" stroke-width="1"/><circle cx="4.500" cy="10.500" r="1.700" fill="#e02020"/></svg>
<div class="tog" style="left:1040px;top:173px;width:23px;height:22px"></div>
<svg class="a" style="left:1043px;top:176px" width="18" height="17" viewBox="0 0 18 17"><defs><linearGradient id="gG" x1="0" x2="1" y1="0" y2="1"><stop offset="0" stop-color="#d8ecfc"/><stop offset="1" stop-color="#4a94e0"/></linearGradient></defs><path d="M1 6q6-6 15-3q-3 5-2 12l-7-2q-5-2-6-7z" fill="url(#gG)" stroke="#3878c0" stroke-width="0.600"/><path d="M14 15l-3-5l3-2z" fill="#b8b8b8"/><circle cx="9.500" cy="5.500" r="2" fill="#e02020"/></svg>
<div class="tog" style="left:1066px;top:162px;width:23px;height:22px"></div>
<svg class="a" style="left:1069px;top:165px" width="18" height="16" viewBox="0 0 18 16"><path d="M1 9l8-7l8 5q-5 0-9 8z" fill="#2828a0"/><path d="M3.500 7l6 6M6 4.500l6 5M9 2.500l5 4M2 10l9-7M5 12l9-6" stroke="#d0d8ff" stroke-width="0.700" stroke-dasharray="1.500 1"/><circle cx="11" cy="6.500" r="2" fill="#e02020"/></svg>
<svg class="a" style="left:1072px;top:188px" width="11" height="15" viewBox="0 0 11 15"><path d="M0.500 1l9 4v9l-9-4zM0.500 4.500l9 4M0.500 7.500l9 4M3.500 2.500v9M6.500 4v9" fill="none" stroke="#222" stroke-width="1"/><circle cx="6.500" cy="6" r="1.300" fill="#e02020"/></svg>
<div class="vsep" style="left:1095px;top:164px;height:40px"></div>
<svg class="a" style="left:1107px;top:176px" width="18" height="17" viewBox="0 0 18 17"><rect x="2.500" y="2.500" width="13" height="11" fill="#f0f4fc" stroke="#2a3ad0" stroke-dasharray="1.500 1.200"/><path d="M2 2.500h14" stroke="#3a4ac8" stroke-width="2"/><circle cx="8.500" cy="8.500" r="4" fill="#e8e8e8" stroke="#444" stroke-width="1"/><path d="M11.500 11.500l3 3" stroke="#d09020" stroke-width="2"/><circle cx="2" cy="14.500" r="1.600" fill="#e02020"/><circle cx="16" cy="2.500" r="1.600" fill="#e02020"/></svg>
<svg class="a" style="left:1133px;top:176px" width="17" height="17" viewBox="0 0 17 17"><rect x="0.500" y="1.500" width="14" height="10" fill="#d4dcf4" stroke="#6a78b8"/><path d="M6 14q-2-4 0-5l1-3l1.500 2l1-3l1.500 3l1-2l1 3l1.500-1q1 4-2 7z" fill="#ecc890" stroke="#b08850" stroke-width="0.500"/></svg>
<svg class="a" style="left:1157px;top:176px" width="17" height="17" viewBox="0 0 17 17"><path d="M2.500 9q0-6 6-6.500q4 0 5.500 3" fill="none" stroke="#3a4a9a" stroke-width="1.700"/><path d="M14.500 8q0 6-6 6.500q-4 0-5.500-3" fill="none" stroke="#3a4a9a" stroke-width="1.700"/><path d="M12 6h4.500v-4.500z" fill="#3a4a9a"/><path d="M5 11h-4.500v4.500z" fill="#3a4a9a"/></svg>
<svg class="a" style="left:1183px;top:176px" width="18" height="17" viewBox="0 0 18 17"><path d="M1 10l9-4l3 2v4l-9 4l-3-2z" fill="#4a5ad0"/><path d="M1 10l9-4l3 2l-9 4z" fill="#8a98f0"/><path d="M13 3l1.500-1.500M14 5h2M12 1.500v1" stroke="#e02020" stroke-width="1"/><circle cx="14.500" cy="2.500" r="1" fill="#e02020"/></svg>
<svg class="a" style="left:1207px;top:175px" width="18" height="18" viewBox="0 0 18 18"><rect x="1.500" y="0.500" width="8" height="11" fill="#f8f8f8" stroke="#c8c8c8"/><path d="M3 3h2M3 6h2M3 9h2M6 3h2M6 6h2" stroke="#c8c8c8"/><path d="M5 14l5-3h7l-5 3zM5 14v3h7v-3M12 17l5-3v-3" fill="#f0f0f0" stroke="#c0c0c0" stroke-width="0.800"/></svg>
<svg class="a" style="left:1234px;top:176px" width="16" height="16" viewBox="0 0 16 16"><rect x="0.500" y="0.500" width="14" height="14" fill="#f4d8d8" stroke="#3a4ac8"/><rect x="0.500" y="0.500" width="14" height="3" fill="#3a4ac8"/><path d="M3 6h3l-3 3zM12 6h-3l3 3zM3 13h3l-3-3zM12 13h-3l3-3z" fill="#e02020"/></svg>
<div class="dd" style="left:1256px;top:181.25px"></div>
<svg class="a" style="left:1269px;top:176px" width="17" height="16" viewBox="0 0 17 16"><path d="M1 10l5-8l8 3l-4 7z" fill="#8a8a8a" stroke="#444" stroke-width="0.700"/><path d="M1 10l9 2l6-1l-1 2l-6 2l-8-3z" fill="#c4c4c4" stroke="#444" stroke-width="0.700"/></svg>
<div class="dd" style="left:1292.5px;top:181.25px"></div>
<svg class="a" style="left:1307px;top:166px" width="16" height="15" viewBox="0 0 16 15"><path d="M1 4l6-3l8 2v7l-6 4l-8-3z" fill="#7a8ae8"/><path d="M9 14v-7l6-4v7z" fill="#5a6ad0"/><path d="M1 4l8 3l6-4l-8-2z" fill="#b8c4f8"/></svg>
<div class="dd" style="left:1330.5px;top:171.25px"></div>
<svg class="a" style="left:1306px;top:189px" width="17" height="13" viewBox="0 0 17 13"><path d="M1 0.500l4 3l-4 3z" fill="#18b018"/><path d="M1 6.500l4 3l-4 3z" fill="#e01818"/><path d="M6 7l5-6l5 5l-5 6z" fill="#d8e4f4" stroke="#333" stroke-width="0.800"/><path d="M9 7l2-2.500l2.500 2.500l-2.500 2.500z" fill="#6a9ad8"/></svg>
<div class="dd" style="left:1330.5px;top:192.25px"></div>
<div class="vsep" style="left:1345px;top:164px;height:40px"></div>
<div class="dd" style="left:1368.5px;top:195.75px"></div><!--tb2-E-->
<div class="hl" style="left:6px;top:207px;width:1374px;background:#a5a5a5"></div>

<!-- LEFT PANEL placeholder -->
<div id="left">
<div class="a" style="left:6px;top:208px;width:32px;height:554px;background:#dcdcdc"></div>
<div class="a" style="left:37px;top:208px;width:1px;height:554px;background:#a8a8a8"></div>
<div class="a" style="left:8px;top:374px;width:30px;height:46px;background:#fff;border:1px solid #a8a8a8;border-right:none"></div>
<!--resicons-S--><svg class="a" style="left:13px;top:214px" width="15" height="15" viewBox="0 0 15 15"><g transform="translate(7.500 7.500)"><g fill="#222"><rect x="-1.200" y="-7" width="2.400" height="14"/><rect x="-1.200" y="-7" width="2.400" height="14" transform="rotate(45)"/><rect x="-1.200" y="-7" width="2.400" height="14" transform="rotate(90)"/><rect x="-1.200" y="-7" width="2.400" height="14" transform="rotate(135)"/><circle r="5.200"/></g><circle r="3.600" fill="#dcdcdc"/></g></svg>
<svg class="a" style="left:12px;top:258px" width="26" height="26" viewBox="0 0 26 26"><g stroke="#c08000" stroke-width="0.500"><path d="M2 2.75l3.5 -1.75l3.5 1.75v3.8500000000000005l-3.5 1.75l-3.5 -1.75z" fill="#f8b818"/><path d="M2 2.75l3.5 1.75l3.5 -1.75l-3.5 -1.75z" fill="#ffe890"/><path d="M2 2.75l3.5 1.75v3.8500000000000005l-3.5 -1.75z" fill="#ffd040"/></g><g stroke="#c08000" stroke-width="0.500"><path d="M2 8.25l3.5 -1.75l3.5 1.75v3.8500000000000005l-3.5 1.75l-3.5 -1.75z" fill="#f8b818"/><path d="M2 8.25l3.5 1.75l3.5 -1.75l-3.5 -1.75z" fill="#ffe890"/><path d="M2 8.25l3.5 1.75v3.8500000000000005l-3.5 -1.75z" fill="#ffd040"/></g><g stroke="#c08000" stroke-width="0.500"><path d="M7.5 7.25l3.5 -1.75l3.5 1.75v3.8500000000000005l-3.5 1.75l-3.5 -1.75z" fill="#f8b818"/><path d="M7.5 7.25l3.5 1.75l3.5 -1.75l-3.5 -1.75z" fill="#ffe890"/><path d="M7.5 7.25l3.5 1.75v3.8500000000000005l-3.5 -1.75z" fill="#ffd040"/></g><g stroke="#c08000" stroke-width="0.500"><path d="M12.5 18.125l4.25 -2.125l4.25 2.125v4.675000000000001l-4.25 2.125l-4.25 -2.125z" fill="#f8b818"/><path d="M12.5 18.125l4.25 2.125l4.25 -2.125l-4.25 -2.125z" fill="#ffe890"/><path d="M12.5 18.125l4.25 2.125v4.675000000000001l-4.25 -2.125z" fill="#ffd040"/></g><path d="M14 13.500h9.500" stroke="#111" stroke-width="1.200"/><path d="M5.500 13.500v11.500M5.500 19.500h5.500" stroke="#1818b0" stroke-width="1.400" fill="none"/></svg>
<svg class="a" style="left:12px;top:300px" width="24" height="26" viewBox="0 0 24 26"><path d="M4 2l7 4.700l-7 4.700z" fill="#1414d0"/><path d="M19 2l-7 4.700l7 4.700z" fill="#1414d0"/><path d="M11.500 1v24" stroke="#111" stroke-width="1" stroke-dasharray="2 1.500"/><rect x="1.500" y="15.500" width="8" height="8" fill="#f8f040" stroke="#a07000" stroke-width="0.900"/><path d="M12.800 23.700v-9.500l9 9.500z" fill="#e01818" stroke="#800" stroke-width="0.600"/></svg>
<svg class="a" style="left:12px;top:343px" width="26" height="26" viewBox="0 0 26 26"><rect x="1" y="3" width="10" height="7.500" fill="#b848a8"/><ellipse cx="6" cy="10.500" rx="5" ry="1.800" fill="#a03890"/><ellipse cx="6" cy="3.200" rx="5" ry="2" fill="#f0c8e8" stroke="#903080" stroke-width="0.700"/><path d="M2.500 5v5" stroke="#e8a8d8" stroke-width="1.400"/><path d="M12.500 9.300h9.500" stroke="#111" stroke-width="1.200"/><path d="M5.700 12.500v11M5.700 18.800h5.300" stroke="#1818b0" stroke-width="1.400" fill="none"/><circle cx="16.300" cy="18.800" r="4" fill="#f8e8f4" stroke="#902080" stroke-width="1.100"/><circle cx="16.300" cy="18.800" r="1.500" fill="none" stroke="#902080" stroke-width="1"/></svg>
<svg class="a" style="left:12px;top:384px" width="26" height="28" viewBox="0 0 26 28"><path d="M2.500 2h4.500v8l-2.200 3l-2.300-3z" fill="#2a7ae0"/><path d="M3.500 3v7" stroke="#8ac0ff" stroke-width="1"/><path d="M0.500 8.500l2 2M9 8.500l-2 2" stroke="#2a7ae0" stroke-width="1"/><path d="M9 5h8M8.500 7.800h6" stroke="#2a7ae0" stroke-width="1.300"/><path d="M13.300 11.400h9" stroke="#111" stroke-width="1.200"/><path d="M5.300 12.500v12.500M5.300 19.600h5.800" stroke="#1818b0" stroke-width="1.400" fill="none"/><path d="M13.800 16.800v6h6.300v-3h-3v-3z" fill="#fff" stroke="#2050d0" stroke-width="1"/></svg>
<svg class="a" style="left:12px;top:426px" width="26" height="26" viewBox="0 0 26 26"><path d="M1 9l15-8v13l-15 8z" fill="#fff8f0" stroke="#e09040" stroke-width="0.500"/><path d="M1 9l15-8" stroke="#8030c0" stroke-width="1.600"/><path d="M1 12.500l15-8M1 16l15-8M1 19.500l15-8M4.800 7v13M8.600 5v13M12.400 3v13" stroke="#f08030" stroke-width="0.800"/><path d="M8 17l8-4l8 3v5l-8 4l-8-3z" fill="#2a78e0"/><path d="M8 17l8-4l8 3l-8 4z" fill="#80c0ff"/><path d="M10.500 17l5.500-2.700l5.500 2l-5.500 2.700z" fill="#ff9020" stroke="#a05000" stroke-width="0.400"/><path d="M16 20v5l8-4v-5z" fill="#1450b0"/></svg>
<svg class="a" style="left:12px;top:469px" width="26" height="24" viewBox="0 0 26 24"><path d="M3 8l10-3v12l-10 3z" fill="#e8e8e8" stroke="#444" stroke-width="0.800"/><path d="M6 10l5-1.500v8l-5 1.500z" fill="#a8b8c8" stroke="#444" stroke-width="0.500"/><path d="M13 5l4 2v12l-4-2z" fill="#b8b8b8" stroke="#444" stroke-width="0.700"/><path d="M1 20l16 2h7M17 12h4v8" stroke="#333" stroke-width="1" fill="none"/><g stroke="#a03000" stroke-width="0.500"><path d="M16 3l3.500-1.500l3.500 1.500v3.500l-3.500 1.500l-3.500-1.500z" fill="#ff8030"/><path d="M16 3l3.500 1.500l3.500-1.500l-3.500-1.500z" fill="#ffd0a0"/></g></svg>
<svg class="a" style="left:11px;top:510px" width="27" height="25" viewBox="0 0 27 25"><path d="M1.5 8l4.500-6h5.500l-4.500 6z" fill="#fff" stroke="#b05800" stroke-width="0.500"/><path d="M1.5 8h5.500v14h-5.500z" fill="#f08820" stroke="#b05800" stroke-width="0.500"/><path d="M7.0 8l4.500-6v13l-4.500 7z" fill="#b05800"/><path d="M2.5 11h3.500M2.5 19h3.500" stroke="#fff" stroke-width="0.600" opacity="0.700"/><path d="M7.5 8l4.500-6h5.500l-4.500 6z" fill="#fff" stroke="#187018" stroke-width="0.500"/><path d="M7.5 8h5.500v14h-5.500z" fill="#38c038" stroke="#187018" stroke-width="0.500"/><path d="M13.0 8l4.500-6v13l-4.500 7z" fill="#187018"/><path d="M8.5 11h3.500M8.5 19h3.500" stroke="#fff" stroke-width="0.600" opacity="0.700"/><path d="M13.5 8l4.500-6h5.500l-4.500 6z" fill="#fff" stroke="#1048a0" stroke-width="0.500"/><path d="M13.5 8h5.500v14h-5.500z" fill="#3080e0" stroke="#1048a0" stroke-width="0.500"/><path d="M19.0 8l4.500-6v13l-4.500 7z" fill="#1048a0"/><path d="M14.5 11h3.500M14.5 19h3.500" stroke="#fff" stroke-width="0.600" opacity="0.700"/></svg>
<svg class="a" style="left:11px;top:563px" width="28" height="30" viewBox="0 0 28 30"><defs><radialGradient id="ib" cx="0.350" cy="0.300" r="0.800"><stop offset="0" stop-color="#8ac0ff"/><stop offset="1" stop-color="#1050c0"/></radialGradient></defs><path d="M10 5q10 0 14 12" fill="none" stroke="#2060c8" stroke-width="2.600"/><path d="M11 10q6 0 9 8" fill="none" stroke="#2060c8" stroke-width="2.400"/><circle cx="9" cy="20" r="7.500" fill="url(#ib)" stroke="#0a3a90" stroke-width="0.600"/><text x="9" y="25" font-size="12" font-weight="bold" fill="#fff" text-anchor="middle" font-family="Liberation Serif, serif">i</text></svg>
<svg class="a" style="left:13px;top:617px" width="24" height="28" viewBox="0 0 24 28"><path d="M2.500 1.500h12l6 6v19h-18z" fill="#fff" stroke="#2050b0" stroke-width="1.400"/><path d="M14.500 1.500v6h6" fill="#d8e4f8" stroke="#2050b0" stroke-width="1"/><circle cx="11.500" cy="17" r="6" fill="#3888e0" stroke="#104080" stroke-width="0.600"/><path d="M8 14q3-2 5 0q1 3-1 4q-3 1-4 4q-2-3 0-8z" fill="#38b048"/></svg>
<svg class="a" style="left:9px;top:669px" width="30" height="24" viewBox="0 0 30 24"><path d="M1 21q6 1 10-2h12q4 0 5-3" fill="none" stroke="#777" stroke-width="1"/><circle cx="15" cy="11" r="9" fill="#f4f4f4" stroke="#666" stroke-width="1.400"/><circle cx="15" cy="11" r="7" fill="#fff" stroke="#bbb" stroke-width="0.600"/><path d="M15 5.500v6h5" fill="none" stroke="#1838a0" stroke-width="1.800"/></svg>
<svg class="a" style="left:15px;top:697px" width="11" height="60" viewBox="0 0 11 60"><path d="M2 6l3.500-4l3.500 4z" fill="#b8b8b8"/><path d="M1.500 8.500h8" stroke="#b8b8b8"/><path d="M2 24l3.500-4l3.500 4z" fill="#b8b8b8"/><path d="M2 36l3.500 4l3.500-4z" fill="#111"/><path d="M1.500 50.500h8" stroke="#111" stroke-width="1.200"/><path d="M2 53l3.500 4l3.500-4z" fill="#111"/></svg><!--resicons-E-->
<div class="t cj" style="left:48px;top:216px;font-size:12px;color:#111">工序导航器 - 机床</div>
<!-- nav table header -->
<div class="a" style="left:44px;top:236px;width:269px;height:22px;background:#f0f0f0;border:1px solid #d5d5d5;border-top-color:#e4e4e4"></div>
<div class="vsep" style="left:245px;top:237px;height:20px;background:#d0d0d0"></div>
<div class="vsep" style="left:296px;top:237px;height:20px;background:#d0d0d0"></div>
<div class="t cj" style="left:51px;top:242px;font-size:12px">名称</div>
<div class="t cj" style="left:252px;top:242px;font-size:12px">刀轨</div>
<div class="t cj" style="left:302px;top:242px;font-size:12px">刀</div>
<div class="hl" style="left:45px;top:278px;width:268px;background:#ececec"></div>
<div class="hl" style="left:45px;top:298px;width:268px;background:#ececec"></div>
<div class="hl" style="left:45px;top:318px;width:268px;background:#ececec"></div>
<div class="hl" style="left:45px;top:338px;width:268px;background:#ececec"></div>
<div class="hl" style="left:45px;top:358px;width:268px;background:#ececec"></div>
<div class="hl" style="left:45px;top:378px;width:268px;background:#ececec"></div>
<div class="hl" style="left:45px;top:398px;width:268px;background:#ececec"></div>
<div class="hl" style="left:45px;top:418px;width:268px;background:#ececec"></div>
<div class="hl" style="left:45px;top:438px;width:268px;background:#ececec"></div>
<div class="hl" style="left:45px;top:458px;width:268px;background:#ececec"></div>
<div class="hl" style="left:45px;top:478px;width:268px;background:#ececec"></div>
<div class="hl" style="left:45px;top:498px;width:268px;background:#ececec"></div>
<div class="hl" style="left:45px;top:518px;width:268px;background:#ececec"></div>

<div class="vsep" style="left:296px;top:258px;height:270px;background:#ececec"></div>
<div class="a" style="left:81px;top:339px;width:232px;height:19px;background:#8cc3d3"></div>
<div class="a" style="left:44px;top:236px;width:1px;height:310px;background:#c4c4c4"></div>
<div class="a" style="left:245px;top:258px;width:1px;height:270px;background:#000"></div>
<div class="t la" style="left:49px;top:262px;font-size:12px">GENERIC_MACHINE</div>
<div class="t cj" style="left:84px;top:282px;font-size:12px">未用项</div>
<div class="t la" style="left:84px;top:302px;font-size:12px">SPOTDRILLING_TOOL</div>
<div class="t la" style="left:84px;top:322px;font-size:12px">DRILLING_TOOL</div>
<div class="t la" style="left:84px;top:342px;font-size:12px">OD_80_L</div>
<!--navicons-S--><div class="a" style="left:55px;top:289px;width:0;height:62px;border-left:1px dotted #9a9a9a"></div>
<div class="a" style="left:55px;top:289px;width:9px;height:0;border-top:1px dotted #9a9a9a"></div>
<div class="a" style="left:55px;top:309px;width:8px;height:0;border-top:1px dotted #9a9a9a"></div>
<div class="a" style="left:55px;top:329px;width:8px;height:0;border-top:1px dotted #9a9a9a"></div>
<div class="a" style="left:55px;top:350px;width:8px;height:0;border-top:1px dotted #9a9a9a"></div>
<svg class="a" style="left:66px;top:282px" width="15" height="13" viewBox="0 0 15 13"><path d="M0.500 2.500h5l1.500 1.500h7v8.500h-13.500z" fill="#fce890" stroke="#b08a20" stroke-width="0.900"/><rect x="6" y="4.500" width="6.500" height="6.500" fill="#fff" stroke="#2030b0" stroke-width="0.600"/><path d="M7.500 6h3.500M7.500 7.800h3.500M7.500 9.600h3.500M10.800 6v3.600" stroke="#2030b0" stroke-width="0.900"/></svg>
<svg class="a" style="left:67px;top:301px" width="12" height="17" viewBox="0 0 12 17"><path d="M3 1h6v10l-3 4l-3-4z" fill="#e8ecf4" stroke="#223" stroke-width="1"/><path d="M3.500 8l5-5M3.500 12l5-5" stroke="#223" stroke-width="1.600"/></svg>
<svg class="a" style="left:67px;top:321px" width="12" height="17" viewBox="0 0 12 17"><path d="M3 1h6v10l-3 4l-3-4z" fill="#e8ecf4" stroke="#223" stroke-width="1"/><path d="M3.500 8l5-5M3.500 12l5-5" stroke="#223" stroke-width="1.600"/></svg>
<svg class="a" style="left:66px;top:340px" width="15" height="18" viewBox="0 0 15 18"><path d="M6 1h7v10l-2 3v-9h-5z" fill="#3a3a3a"/><path d="M6 1h5v12h-5z" fill="#5a5a5a"/><path d="M1 15l3-9l5-1v9z" fill="#f4b818" stroke="#7a4a00" stroke-width="0.900"/><circle cx="5.500" cy="11" r="1.300" fill="#7a4a00"/></svg><!--navicons-E-->
<!-- hscroll -->
<div class="a" style="left:45px;top:528px;width:268px;height:17px;background:#f0f0f0"></div>
<div class="a" style="left:64px;top:528px;width:92px;height:17px;background:#cdcdcd"></div>
<svg class="a" style="left:50px;top:531px" width="10" height="11" viewBox="0 0 10 11"><path d="M7 1.500L3 5.500L7 9.500" fill="none" stroke="#555" stroke-width="1.800"/></svg>
<div class="a" style="left:44px;top:547px;width:269px;height:5px;background:#dedede;border:1px solid #a8a8a8;border-right:none"></div>
<div class="t blue cj" style="left:51px;top:556px;font-size:14px">相关性</div>
<div class="hl" style="left:44px;top:574px;width:269px;height:3px;background:#e2e2e2"></div>
<div class="t blue cj" style="left:51px;top:580px;font-size:14px">细节</div>
<div class="a" style="left:44px;top:577px;width:270px;height:179px;border:1px solid #d8d8d8;border-right:none;border-top:none"></div>
<div class="a" style="left:52px;top:604px;width:261px;height:23px;background:#f0f0f0;border:1px solid #d5d5d5"></div>
<div class="vsep" style="left:152px;top:605px;height:21px"></div>
<div class="vsep" style="left:252px;top:605px;height:21px"></div>
<div class="t cj" style="left:59px;top:610px;font-size:12px">参数</div>
<div class="t cj" style="left:158px;top:610px;font-size:12px">继承自</div>
<div class="t cj" style="left:258px;top:610px;font-size:12px">值</div>
<div class="hl" style="left:53px;top:646px;width:243px;background:#ececec"></div>
<svg class="a" style="left:55px;top:630px" width="12" height="12" viewBox="0 0 12 12"><rect x="0.5" y="0.5" width="11" height="11" fill="#fff" stroke="#444"/><path d="M2.5 6l2.300 2.500l4.500-5.500" fill="none" stroke="#b0b0b0" stroke-width="1.600"/></svg>
<div class="t cj" style="left:72px;top:630px;font-size:12px">定制参数</div>
<div class="t cj" style="left:157px;top:630px;font-size:12px">默认值</div>
<div class="t la" style="left:257px;top:630px;font-size:12px">0</div>
<div class="hl" style="left:53px;top:666px;width:243px;background:#ececec"></div>
<svg class="a" style="left:55px;top:650px" width="12" height="12" viewBox="0 0 12 12"><rect x="0.5" y="0.5" width="11" height="11" fill="#fff" stroke="#444"/><path d="M2.5 6l2.300 2.500l4.500-5.500" fill="none" stroke="#b0b0b0" stroke-width="1.600"/></svg>
<div class="t cj" style="left:72px;top:650px;font-size:12px">外部 ID</div>
<div class="t cj" style="left:157px;top:650px;font-size:12px">默认值</div>
<div class="t la" style="left:257px;top:650px;font-size:12px"></div>
<div class="hl" style="left:53px;top:686px;width:243px;background:#ececec"></div>
<svg class="a" style="left:55px;top:670px" width="12" height="12" viewBox="0 0 12 12"><rect x="0.5" y="0.5" width="11" height="11" fill="#fff" stroke="#444"/><path d="M2.5 6l2.300 2.500l4.500-5.500" fill="none" stroke="#b0b0b0" stroke-width="1.600"/></svg>
<div class="t cj" style="left:72px;top:670px;font-size:12px">有多个事例</div>
<div class="t cj" style="left:157px;top:670px;font-size:12px">默认值</div>
<div class="t la" style="left:257px;top:670px;font-size:12px">0</div>
<div class="hl" style="left:53px;top:706px;width:243px;background:#ececec"></div>
<svg class="a" style="left:55px;top:690px" width="12" height="12" viewBox="0 0 12 12"><rect x="0.5" y="0.5" width="11" height="11" fill="#fff" stroke="#444"/><path d="M2.5 6l2.300 2.500l4.500-5.500" fill="none" stroke="#b0b0b0" stroke-width="1.600"/></svg>
<div class="t cj" style="left:72px;top:690px;font-size:12px">对象变量</div>
<div class="t cj" style="left:157px;top:690px;font-size:12px">默认值</div>
<div class="t la" style="left:257px;top:690px;font-size:12px">0</div>
<div class="hl" style="left:53px;top:726px;width:243px;background:#ececec"></div>
<svg class="a" style="left:55px;top:710px" width="12" height="12" viewBox="0 0 12 12"><rect x="0.5" y="0.5" width="11" height="11" fill="#fff" stroke="#444"/><path d="M2.5 6l2.300 2.500l4.500-5.500" fill="none" stroke="#b0b0b0" stroke-width="1.600"/></svg>
<div class="t cj" style="left:72px;top:710px;font-size:12px">刀具刚度</div>
<div class="t cj" style="left:157px;top:710px;font-size:12px">默认值</div>
<div class="t la" style="left:257px;top:710px;font-size:12px">1.0000</div>

<div class="vsep" style="left:252px;top:626px;height:102px;background:#ececec"></div>
<div class="a" style="left:152px;top:627px;width:1px;height:102px;background:#000"></div>
<!-- vscroll -->
<div class="a" style="left:296px;top:626px;width:16px;height:102px;background:#f0f0f0"></div>
<div class="a" style="left:297px;top:645px;width:14px;height:28px;background:#cdcdcd"></div>
<svg class="a" style="left:298px;top:631px" width="11" height="10" viewBox="0 0 11 10"><path d="M1.500 7L5.500 3L9.500 7" fill="none" stroke="#555" stroke-width="1.800"/></svg>
<svg class="a" style="left:298px;top:713px" width="11" height="10" viewBox="0 0 11 10"><path d="M1.500 3L5.500 7L9.500 3" fill="none" stroke="#555" stroke-width="1.800"/></svg>
<!-- hscroll2 -->
<div class="a" style="left:53px;top:730px;width:243px;height:17px;background:#f0f0f0"></div>
<div class="a" style="left:70px;top:731px;width:167px;height:15px;background:#cdcdcd"></div>
<svg class="a" style="left:56px;top:733px" width="10" height="11" viewBox="0 0 10 11"><path d="M7 1.500L3 5.500L7 9.500" fill="none" stroke="#555" stroke-width="1.800"/></svg>
<svg class="a" style="left:282px;top:733px" width="10" height="11" viewBox="0 0 10 11"><path d="M3 1.500L7 5.500L3 9.500" fill="none" stroke="#555" stroke-width="1.800"/></svg>
<div class="hl" style="left:52px;top:748px;width:261px;background:#e0e0e0"></div>
</div>

<!-- VIEWPORT placeholder -->
<div id="view">
<div class="a" style="left:640px;top:229px;width:740px;height:2px;background:#4f9ab6"></div>
<div class="a" style="left:640px;top:231px;width:740px;height:530px;background:linear-gradient(180deg,#b5b6b8 0%,#b9babc 14%,#d0d1d3 50%,#e3e4e6 75%,#e8e9eb 88%,#e8e9eb 100%)"></div>
<svg id="imp" class="a" style="left:640px;top:231px" width="740" height="530" viewBox="640 231 740 530"><!--impbody-S--><defs>
<radialGradient id="dg" gradientUnits="userSpaceOnUse" cx="735" cy="515" r="220">
<stop offset="0" stop-color="#ff9a06"/><stop offset="0.300" stop-color="#ffa208"/><stop offset="0.500" stop-color="#ffc012"/><stop offset="0.650" stop-color="#ffd816"/><stop offset="1" stop-color="#ffd614"/></radialGradient>
<radialGradient id="hl" gradientUnits="userSpaceOnUse" cx="855" cy="630" r="70"><stop offset="0" stop-color="#fff840" stop-opacity="0.900"/><stop offset="1" stop-color="#fff040" stop-opacity="0"/></radialGradient>
<radialGradient id="hl2" gradientUnits="userSpaceOnUse" cx="780" cy="680" r="60"><stop offset="0" stop-color="#fff23a" stop-opacity="0.700"/><stop offset="1" stop-color="#fff040" stop-opacity="0"/></radialGradient>
<radialGradient id="br" gradientUnits="userSpaceOnUse" cx="760" cy="450" r="260"><stop offset="0.200" stop-color="#6a3c00"/><stop offset="0.600" stop-color="#744400"/><stop offset="1" stop-color="#966200"/></radialGradient>
<linearGradient id="fan" gradientUnits="userSpaceOnUse" x1="0" y1="0" x2="1" y2="0"><stop offset="0" stop-color="#ffb416"/><stop offset="1" stop-color="#f08c00"/></linearGradient>
<radialGradient id="fang" gradientUnits="userSpaceOnUse" cx="751" cy="441" r="112"><stop offset="0.400" stop-color="#f59000"/><stop offset="0.750" stop-color="#ffa810"/><stop offset="1" stop-color="#ffbe20"/></radialGradient>
<radialGradient id="hole" gradientUnits="userSpaceOnUse" cx="742" cy="436" r="24"><stop offset="0" stop-color="#c07000"/><stop offset="0.600" stop-color="#7e4a00"/><stop offset="1" stop-color="#5e3600"/></radialGradient>
<clipPath id="vc"><rect x="640" y="231" width="740" height="530"/></clipPath>
</defs>
<g clip-path="url(#vc)" stroke-linejoin="round">
<path d="M630.0 372.0C640.0 349.0 648.3 364.7 660.0 362.0C671.7 359.3 683.3 357.3 700.0 356.0C716.7 354.7 741.5 351.3 760.0 354.0C778.5 356.7 798.7 367.2 811.0 372.0C823.3 376.8 824.8 378.0 834.0 383.0C843.2 388.0 856.7 395.7 866.0 402.0C875.3 408.3 882.7 413.7 890.0 421.0C897.3 428.3 904.2 437.5 910.0 446.0C915.8 454.5 921.0 463.0 925.0 472.0C929.0 481.0 931.9 489.5 934.0 500.0C936.1 510.5 937.5 523.3 937.5 535.0C937.5 546.7 936.2 558.8 934.0 570.0C931.8 581.2 928.8 591.5 924.0 602.0C919.2 612.5 912.3 623.3 905.0 633.0C897.7 642.7 889.5 651.8 880.0 660.0C870.5 668.2 859.7 675.7 848.0 682.0C836.3 688.3 822.2 694.2 810.0 698.0C797.8 701.8 785.8 703.5 775.0 705.0C764.2 706.5 755.8 707.3 745.0 707.0C734.2 706.7 721.7 705.5 710.0 703.0C698.3 700.5 686.7 696.7 675.0 692.0C663.3 687.3 649.2 680.3 640.0 675.0C630.8 669.7 626.7 689.2 620.0 660.0C613.3 630.8 598.3 548.0 600.0 500.0C601.7 452.0 620.0 395.0 630.0 372.0Z" fill="#7e4c00"/>
<path d="M630.0 372.0C640.0 349.0 648.3 364.7 660.0 362.0C671.7 359.3 683.3 357.3 700.0 356.0C716.7 354.7 741.5 351.3 760.0 354.0C778.5 356.7 798.7 367.2 811.0 372.0C823.3 376.8 824.8 378.0 834.0 383.0C843.2 388.0 856.7 395.7 866.0 402.0C875.3 408.3 882.7 413.7 890.0 421.0C897.3 428.3 904.2 437.5 910.0 446.0C915.8 454.5 921.0 463.0 925.0 472.0C929.0 481.0 932.0 489.5 934.0 500.0C936.0 510.5 937.2 523.7 937.0 535.0C936.8 546.3 935.5 557.3 933.0 568.0C930.5 578.7 927.2 588.8 922.0 599.0C916.8 609.2 909.7 619.8 902.0 629.0C894.3 638.2 885.5 646.3 876.0 654.0C866.5 661.7 856.3 669.0 845.0 675.0C833.7 681.0 819.7 686.3 808.0 690.0C796.3 693.7 785.5 695.6 775.0 697.0C764.5 698.4 755.5 698.8 745.0 698.5C734.5 698.2 723.2 697.2 712.0 695.0C700.8 692.8 689.2 689.5 678.0 685.0C666.8 680.5 654.7 673.5 645.0 668.0C635.3 662.5 627.5 680.0 620.0 652.0C612.5 624.0 598.3 546.7 600.0 500.0C601.7 453.3 620.0 395.0 630.0 372.0Z" fill="url(#dg)" stroke="#2a1c04" stroke-width="0.600"/>
<path d="M630.0 372.0C640.0 349.0 648.3 364.7 660.0 362.0C671.7 359.3 683.3 357.3 700.0 356.0C716.7 354.7 741.5 351.3 760.0 354.0C778.5 356.7 798.7 367.2 811.0 372.0C823.3 376.8 824.8 378.0 834.0 383.0C843.2 388.0 856.7 395.7 866.0 402.0C875.3 408.3 882.7 413.7 890.0 421.0C897.3 428.3 904.2 437.5 910.0 446.0C915.8 454.5 921.0 463.0 925.0 472.0C929.0 481.0 932.0 489.5 934.0 500.0C936.0 510.5 937.2 523.7 937.0 535.0C936.8 546.3 935.5 557.3 933.0 568.0C930.5 578.7 927.2 588.8 922.0 599.0C916.8 609.2 909.7 619.8 902.0 629.0C894.3 638.2 885.5 646.3 876.0 654.0C866.5 661.7 856.3 669.0 845.0 675.0C833.7 681.0 819.7 686.3 808.0 690.0C796.3 693.7 785.5 695.6 775.0 697.0C764.5 698.4 755.5 698.8 745.0 698.5C734.5 698.2 723.2 697.2 712.0 695.0C700.8 692.8 689.2 689.5 678.0 685.0C666.8 680.5 654.7 673.5 645.0 668.0C635.3 662.5 627.5 680.0 620.0 652.0C612.5 624.0 598.3 546.7 600.0 500.0C601.7 453.3 620.0 395.0 630.0 372.0Z" fill="url(#hl)"/>
<path d="M630.0 372.0C640.0 349.0 648.3 364.7 660.0 362.0C671.7 359.3 683.3 357.3 700.0 356.0C716.7 354.7 741.5 351.3 760.0 354.0C778.5 356.7 798.7 367.2 811.0 372.0C823.3 376.8 824.8 378.0 834.0 383.0C843.2 388.0 856.7 395.7 866.0 402.0C875.3 408.3 882.7 413.7 890.0 421.0C897.3 428.3 904.2 437.5 910.0 446.0C915.8 454.5 921.0 463.0 925.0 472.0C929.0 481.0 932.0 489.5 934.0 500.0C936.0 510.5 937.2 523.7 937.0 535.0C936.8 546.3 935.5 557.3 933.0 568.0C930.5 578.7 927.2 588.8 922.0 599.0C916.8 609.2 909.7 619.8 902.0 629.0C894.3 638.2 885.5 646.3 876.0 654.0C866.5 661.7 856.3 669.0 845.0 675.0C833.7 681.0 819.7 686.3 808.0 690.0C796.3 693.7 785.5 695.6 775.0 697.0C764.5 698.4 755.5 698.8 745.0 698.5C734.5 698.2 723.2 697.2 712.0 695.0C700.8 692.8 689.2 689.5 678.0 685.0C666.8 680.5 654.7 673.5 645.0 668.0C635.3 662.5 627.5 680.0 620.0 652.0C612.5 624.0 598.3 546.7 600.0 500.0C601.7 453.3 620.0 395.0 630.0 372.0Z" fill="url(#hl2)"/>
<path d="M925.0 464.0C922.0 465.9 913.3 472.5 907.0 475.5C900.7 478.5 893.3 481.1 887.0 482.0C880.7 482.9 874.0 481.4 869.0 480.6C864.0 479.8 859.8 475.8 857.0 477.0C854.2 478.2 856.5 487.8 852.0 488.0C847.5 488.2 837.7 481.7 830.0 478.0C822.3 474.3 811.3 468.0 806.0 466.0C800.7 464.0 799.3 466.0 798.0 466.0L800.0 478.0C802.5 480.3 809.5 486.3 815.0 492.0C820.5 497.7 827.8 509.5 833.0 512.0C838.2 514.5 840.8 506.7 846.0 507.0C851.2 507.3 858.1 513.1 864.0 513.6C869.9 514.1 875.2 512.6 881.5 510.0C887.8 507.4 896.1 502.8 902.0 498.0C907.9 493.2 913.2 486.3 917.0 481.0C920.8 475.7 923.2 468.5 924.5 466.0Z" fill="url(#br)" stroke="#2a1c04" stroke-width="0.500"/>
<path d="M925.0 464.0C922.0 465.9 913.3 472.5 907.0 475.5C900.7 478.5 893.3 481.1 887.0 482.0C880.7 482.9 874.0 481.4 869.0 480.6C864.0 479.8 859.8 475.8 857.0 477.0C854.2 478.2 856.5 487.8 852.0 488.0C847.5 488.2 837.7 481.7 830.0 478.0C822.3 474.3 811.3 468.0 806.0 466.0C800.7 464.0 799.3 466.0 798.0 466.0L798.0 463.8C799.3 463.8 800.7 461.8 806.0 463.8C811.3 465.8 822.3 472.1 830.0 475.8C837.7 479.5 847.5 486.0 852.0 485.8C856.5 485.6 854.2 476.0 857.0 474.8C859.8 473.6 864.0 477.6 869.0 478.4C874.0 479.2 880.7 480.7 887.0 479.8C893.3 478.9 900.7 476.3 907.0 473.3C913.3 470.3 922.0 463.7 925.0 461.8Z" fill="#ffc81a" stroke="#2a1c04" stroke-width="0.500"/>
<path d="M939.0 524.0C936.2 524.6 928.7 527.0 922.0 527.6C915.3 528.2 905.8 528.5 899.0 527.6C892.2 526.8 887.3 524.8 881.5 522.5C875.7 520.2 869.8 516.3 864.0 513.6C858.2 510.9 852.3 506.8 847.0 506.5C841.7 506.2 837.8 513.8 832.0 512.0C826.2 510.2 818.0 502.0 812.0 496.0C806.0 490.0 798.7 479.3 796.0 476.0L790.0 484.0C791.0 488.3 794.7 502.2 796.0 510.0C797.3 517.8 795.6 527.7 798.0 531.0C800.4 534.3 806.3 529.7 810.5 530.0C814.7 530.3 817.5 530.9 823.0 532.6C828.5 534.3 836.7 537.4 843.5 540.0C850.3 542.6 856.8 546.0 864.0 548.0C871.2 550.0 879.4 551.7 886.6 551.7C893.8 551.7 900.3 550.3 907.0 548.0C913.7 545.7 921.8 541.4 927.0 537.7C932.2 534.0 936.2 528.0 938.0 526.0Z" fill="url(#br)" stroke="#2a1c04" stroke-width="0.500"/>
<path d="M939.0 524.0C936.2 524.6 928.7 527.0 922.0 527.6C915.3 528.2 905.8 528.5 899.0 527.6C892.2 526.8 887.3 524.8 881.5 522.5C875.7 520.2 869.8 516.3 864.0 513.6C858.2 510.9 852.3 506.8 847.0 506.5C841.7 506.2 837.8 513.8 832.0 512.0C826.2 510.2 818.0 502.0 812.0 496.0C806.0 490.0 798.7 479.3 796.0 476.0L796.0 473.8C798.7 477.1 806.0 487.8 812.0 493.8C818.0 499.8 826.2 508.1 832.0 509.8C837.8 511.6 841.7 504.0 847.0 504.3C852.3 504.6 858.2 508.7 864.0 511.4C869.8 514.1 875.7 518.0 881.5 520.3C887.3 522.6 892.2 524.5 899.0 525.4C905.8 526.2 915.3 526.0 922.0 525.4C928.7 524.8 936.2 522.4 939.0 521.8Z" fill="#ffc81a" stroke="#2a1c04" stroke-width="0.500"/>
<path d="M930.0 581.0C927.0 580.5 918.4 579.5 912.0 578.0C905.6 576.5 898.5 574.7 891.7 572.0C884.9 569.3 877.8 565.6 871.4 561.8C865.0 558.0 859.1 553.0 853.6 549.0C848.1 545.0 843.5 540.7 838.4 537.7C833.3 534.7 828.6 532.5 823.0 531.0C817.4 529.5 809.3 528.8 805.0 528.8C800.7 528.8 800.2 535.0 797.0 531.0C793.8 527.0 789.2 512.8 786.0 505.0C782.8 497.2 779.3 487.5 778.0 484.0L770.0 487.0C771.0 492.5 773.8 510.3 776.0 520.0C778.2 529.7 779.3 540.3 783.0 545.0C786.7 549.7 793.0 547.7 798.0 548.0C803.0 548.3 808.0 544.3 813.0 546.6C818.0 548.9 822.5 556.7 828.0 561.8C833.5 566.9 840.0 572.8 846.0 577.0C852.0 581.2 857.9 584.2 863.8 587.0C869.7 589.8 875.6 592.2 881.5 593.5C887.4 594.8 893.4 595.2 899.3 594.8C905.2 594.4 912.0 593.0 917.0 591.0C922.0 589.0 927.0 584.3 929.0 583.0Z" fill="url(#br)" stroke="#2a1c04" stroke-width="0.500"/>
<path d="M930.0 581.0C927.0 580.5 918.4 579.5 912.0 578.0C905.6 576.5 898.5 574.7 891.7 572.0C884.9 569.3 877.8 565.6 871.4 561.8C865.0 558.0 859.1 553.0 853.6 549.0C848.1 545.0 843.5 540.7 838.4 537.7C833.3 534.7 828.6 532.5 823.0 531.0C817.4 529.5 809.3 528.8 805.0 528.8C800.7 528.8 800.2 535.0 797.0 531.0C793.8 527.0 789.2 512.8 786.0 505.0C782.8 497.2 779.3 487.5 778.0 484.0L778.0 481.8C779.3 485.3 782.8 495.0 786.0 502.8C789.2 510.6 793.8 524.8 797.0 528.8C800.2 532.8 800.7 526.6 805.0 526.6C809.3 526.6 817.4 527.3 823.0 528.8C828.6 530.3 833.3 532.5 838.4 535.5C843.5 538.5 848.1 542.8 853.6 546.8C859.1 550.8 865.0 555.8 871.4 559.6C877.8 563.4 884.9 567.1 891.7 569.8C898.5 572.5 905.6 574.3 912.0 575.8C918.4 577.3 927.0 578.3 930.0 578.8Z" fill="#ffc81a" stroke="#2a1c04" stroke-width="0.500"/>
<path d="M899.3 633.0C896.3 631.7 887.4 628.0 881.5 625.0C875.6 622.0 869.7 619.2 863.8 615.0C857.9 610.8 851.5 605.5 846.0 600.0C840.5 594.5 835.9 588.4 830.8 582.0C825.7 575.6 820.2 567.3 815.5 561.8C810.8 556.3 807.4 552.4 802.8 549.0C798.1 545.6 791.7 542.8 787.6 541.5C783.5 540.2 780.9 545.4 778.0 541.0C775.1 536.6 772.2 523.5 770.0 515.0C767.8 506.5 765.8 494.2 765.0 490.0L757.0 490.0C757.5 495.0 758.7 510.3 760.0 520.0C761.3 529.7 761.7 542.7 765.0 548.0C768.3 553.3 775.8 549.4 780.0 551.7C784.2 554.0 785.8 556.9 790.0 561.8C794.2 566.7 800.3 574.6 805.4 581.0C810.5 587.4 815.1 593.9 820.6 600.0C826.1 606.1 832.5 612.9 838.4 617.7C844.3 622.5 849.7 626.0 856.0 629.0C862.3 632.0 869.4 634.5 876.4 635.4C883.4 636.3 894.4 634.6 898.0 634.5Z" fill="url(#br)" stroke="#2a1c04" stroke-width="0.500"/>
<path d="M899.3 633.0C896.3 631.7 887.4 628.0 881.5 625.0C875.6 622.0 869.7 619.2 863.8 615.0C857.9 610.8 851.5 605.5 846.0 600.0C840.5 594.5 835.9 588.4 830.8 582.0C825.7 575.6 820.2 567.3 815.5 561.8C810.8 556.3 807.4 552.4 802.8 549.0C798.1 545.6 791.7 542.8 787.6 541.5C783.5 540.2 780.9 545.4 778.0 541.0C775.1 536.6 772.2 523.5 770.0 515.0C767.8 506.5 765.8 494.2 765.0 490.0L765.0 487.8C765.8 492.0 767.8 504.3 770.0 512.8C772.2 521.3 775.1 534.4 778.0 538.8C780.9 543.2 783.5 538.0 787.6 539.3C791.7 540.6 798.1 543.4 802.8 546.8C807.4 550.2 810.8 554.1 815.5 559.6C820.2 565.1 825.7 573.4 830.8 579.8C835.9 586.2 840.5 592.3 846.0 597.8C851.5 603.3 857.9 608.6 863.8 612.8C869.7 617.0 875.6 619.8 881.5 622.8C887.4 625.8 896.3 629.5 899.3 630.8Z" fill="#ffc81a" stroke="#2a1c04" stroke-width="0.500"/>
<path d="M845.0 670.4C841.9 666.8 832.6 657.4 826.4 649.0C820.2 640.6 813.6 630.0 807.8 619.8C802.0 609.6 796.7 598.1 791.8 587.9C786.9 577.7 781.6 565.8 778.5 558.6C775.4 551.5 775.1 551.4 773.0 545.0C770.9 538.6 768.2 528.3 766.0 520.0C763.8 511.7 761.0 499.2 760.0 495.0L748.0 500.0C748.3 505.0 749.4 521.2 750.0 530.0C750.6 538.8 750.6 544.7 751.8 553.0C753.0 561.3 754.3 571.1 757.0 580.0C759.7 588.9 763.3 597.7 767.8 606.5C772.3 615.3 777.6 624.1 783.8 633.0C790.0 641.9 797.9 653.1 805.0 659.8C812.1 666.5 820.2 670.7 826.4 673.0C832.6 675.3 839.7 673.4 842.4 673.5Z" fill="url(#br)" stroke="#2a1c04" stroke-width="0.500"/>
<path d="M845.0 670.4C841.9 666.8 832.6 657.4 826.4 649.0C820.2 640.6 813.6 630.0 807.8 619.8C802.0 609.6 796.7 598.1 791.8 587.9C786.9 577.7 781.6 565.8 778.5 558.6C775.4 551.5 775.1 551.4 773.0 545.0C770.9 538.6 768.2 528.3 766.0 520.0C763.8 511.7 761.0 499.2 760.0 495.0L760.0 493.0C761.0 497.2 763.8 509.7 766.0 518.0C768.2 526.3 770.9 536.6 773.0 543.0C775.1 549.4 775.4 549.5 778.5 556.6C781.6 563.8 786.9 575.7 791.8 585.9C796.7 596.1 802.0 607.6 807.8 617.8C813.6 628.0 820.2 638.6 826.4 647.0C832.6 655.4 841.9 664.8 845.0 668.4Z" fill="#ffc81a" stroke="#2a1c04" stroke-width="0.500"/>
<path d="M785.0 693.0C783.5 691.5 780.0 690.2 775.8 683.8C771.6 677.4 764.7 665.2 759.8 654.5C754.9 643.8 751.0 632.2 746.5 619.8C742.0 607.4 736.1 589.8 733.0 580.0C729.9 570.2 729.7 567.7 727.9 561.0C726.1 554.3 724.0 546.8 722.0 540.0C720.0 533.2 717.0 523.3 716.0 520.0L706.0 525.0C707.3 528.8 711.5 540.7 714.0 548.0C716.5 555.3 719.6 561.5 721.0 569.0C722.4 576.5 721.5 584.5 722.6 593.0C723.8 601.5 724.8 609.5 727.9 619.8C731.0 630.0 735.7 644.3 741.0 654.5C746.3 664.7 753.5 674.7 759.8 681.0C766.0 687.3 775.4 690.6 778.5 692.5Z" fill="url(#br)" stroke="#2a1c04" stroke-width="0.500"/>
<path d="M785.0 693.0C783.5 691.5 780.0 690.2 775.8 683.8C771.6 677.4 764.7 665.2 759.8 654.5C754.9 643.8 751.0 632.2 746.5 619.8C742.0 607.4 736.1 589.8 733.0 580.0C729.9 570.2 729.7 567.7 727.9 561.0C726.1 554.3 724.0 546.8 722.0 540.0C720.0 533.2 717.0 523.3 716.0 520.0L716.0 518.0C717.0 521.3 720.0 531.2 722.0 538.0C724.0 544.8 726.1 552.3 727.9 559.0C729.7 565.7 729.9 568.2 733.0 578.0C736.1 587.8 742.0 605.4 746.5 617.8C751.0 630.2 754.9 641.8 759.8 652.5C764.7 663.2 771.6 675.4 775.8 681.8C780.0 688.2 783.5 689.5 785.0 691.0Z" fill="#ffc81a" stroke="#2a1c04" stroke-width="0.500"/>
<path d="M714.6 692.0C712.8 687.5 706.9 674.8 704.0 665.0C701.1 655.2 698.6 642.8 697.0 633.0C695.4 623.2 695.3 614.9 694.6 606.5C693.9 598.1 694.1 590.4 693.0 582.6C691.9 574.9 690.2 567.1 688.0 560.0C685.8 552.9 681.3 543.3 680.0 540.0L672.0 545.0C673.3 548.3 678.0 558.3 680.0 565.0C682.0 571.7 683.8 577.2 684.0 585.0C684.2 592.8 680.8 603.1 681.0 612.0C681.2 620.9 683.0 629.7 685.0 638.5C687.0 647.3 689.4 656.4 693.0 665.0C696.6 673.6 704.3 685.8 706.6 690.0Z" fill="url(#br)" stroke="#2a1c04" stroke-width="0.500"/>
<path d="M714.6 692.0C712.8 687.5 706.9 674.8 704.0 665.0C701.1 655.2 698.6 642.8 697.0 633.0C695.4 623.2 695.3 614.9 694.6 606.5C693.9 598.1 694.1 590.4 693.0 582.6C691.9 574.9 690.2 567.1 688.0 560.0C685.8 552.9 681.3 543.3 680.0 540.0L680.0 538.2C681.3 541.5 685.8 551.1 688.0 558.2C690.2 565.3 691.9 573.1 693.0 580.8C694.1 588.6 693.9 596.3 694.6 604.7C695.3 613.1 695.4 621.5 697.0 631.2C698.6 641.0 701.1 653.4 704.0 663.2C706.9 673.0 712.8 685.7 714.6 690.2Z" fill="#ffc81a" stroke="#2a1c04" stroke-width="0.500"/>
<path d="M648.0 674.0C647.2 668.3 644.0 650.7 643.0 640.0C642.0 629.3 642.0 619.3 642.0 610.0C642.0 600.7 642.0 592.3 643.0 584.0C644.0 575.7 647.2 564.0 648.0 560.0L640.0 560.0C639.3 564.0 636.7 575.7 636.0 584.0C635.3 592.3 635.8 600.7 636.0 610.0C636.2 619.3 636.3 629.7 637.0 640.0C637.7 650.3 639.5 666.7 640.0 672.0Z" fill="url(#br)" stroke="#2a1c04" stroke-width="0.500"/></g><!--impbody-E--><!--impfan-S--><g clip-path="url(#vc)" stroke-linejoin="round">
<path d="M636.0 365.0L676.0 355.0L691.0 365.4L670.0 377.0L636.0 372.0Z" fill="#ffd816" stroke="#2a1c04" stroke-width="0.500"/>
<path d="M676.0 355.0L692.0 342.6L699.0 345.0L712.6 359.7L704.6 362.0L691.0 365.4Z" fill="#c47a00" stroke="#2a1c04" stroke-width="0.500"/>
<path d="M699.0 345.0L711.4 353.0L748.0 353.5L748.0 362.0L712.6 362.0Z" fill="#ffd816" stroke="#2a1c04" stroke-width="0.500"/>
<path d="M748.0 354.0L760.6 346.0L767.4 347.0L771.0 356.0L759.4 360.0Z" fill="#c47a00" stroke="#2a1c04" stroke-width="0.500"/>
<path d="M767.4 347.0L771.0 356.0L796.0 361.0L811.0 372.0L800.0 376.0L770.0 362.0Z" fill="#ffd816" stroke="#2a1c04" stroke-width="0.500"/>
<path d="M636.0 373.0L670.0 377.0L656.6 392.0L636.0 388.0Z" fill="#8a5400" stroke="#2a1c04" stroke-width="0.500"/>
<path d="M636.0 389.0L656.6 392.0L650.0 405.0L636.0 408.0Z" fill="#ffd816" stroke="#2a1c04" stroke-width="0.500"/>
<path d="M636.0 408.0L650.0 405.0L645.0 430.0L636.0 432.0Z" fill="#9a6000" stroke="#2a1c04" stroke-width="0.500"/>
<path d="M818.7 374.6L829.0 369.5L832.7 370.8L832.7 391.0L823.8 386.0Z" fill="#c47a00" stroke="#2a1c04" stroke-width="0.500"/>
<path d="M887.3 410.0C886.1 412.5 883.2 420.5 880.0 425.0C876.8 429.5 871.9 434.2 868.0 437.0C864.1 439.8 858.7 441.0 856.8 441.8L862.0 448.0C864.0 447.2 870.3 446.0 874.0 443.0C877.7 440.0 881.5 434.8 884.0 430.0C886.5 425.2 888.2 416.7 889.0 414.0Z" fill="#ffb414" stroke="#2a1c04" stroke-width="0.500"/>
<path d="M856.8 441.8C857.7 442.8 859.1 447.8 862.0 448.0C864.9 448.2 870.3 446.0 874.0 443.0C877.7 440.0 881.5 434.8 884.0 430.0C886.5 425.2 888.2 416.7 889.0 414.0L886.0 440.0C884.0 442.7 878.3 452.3 874.0 456.0C869.7 459.7 864.0 462.2 860.0 462.0C856.0 461.8 851.7 456.2 850.0 455.0Z" fill="#7a4800" stroke="#2a1c04" stroke-width="0.400"/>
<path d="M699.5 438.0L642.0 431.7Q632.9 413.9 651.0 402.5L703.0 421.5Z" fill="url(#fang)" stroke="#2a1c04" stroke-width="0.700"/>
<path d="M703.0 421.5L651.0 402.5Q649.1 382.8 671.5 377.0L712.0 407.6Z" fill="url(#fang)" stroke="#2a1c04" stroke-width="0.700"/>
<path d="M712.0 407.6L671.5 377.0Q676.7 359.1 700.7 362.0L728.6 401.0Z" fill="url(#fang)" stroke="#2a1c04" stroke-width="0.700"/>
<path d="M728.6 401.0L700.7 362.0Q714.8 346.8 737.5 354.0L745.0 398.7Z" fill="url(#fang)" stroke="#2a1c04" stroke-width="0.700"/>
<path d="M745.0 398.7L737.5 354.0Q757.4 344.0 775.6 358.0L764.0 400.0Z" fill="url(#fang)" stroke="#2a1c04" stroke-width="0.700"/>
<path d="M764.0 400.0L775.6 358.0Q795.6 355.4 806.4 370.6L780.7 407.6Z" fill="url(#fang)" stroke="#2a1c04" stroke-width="0.700"/>
<path d="M780.7 407.6L806.4 370.6Q813.5 389.0 836.0 394.5L793.4 419.0Z" fill="url(#fang)" stroke="#2a1c04" stroke-width="0.700"/>
<path d="M793.4 419.0L836.0 394.5Q837.4 411.2 854.0 422.6L801.0 431.7Z" fill="url(#fang)" stroke="#2a1c04" stroke-width="0.700"/>
<path d="M801.0 431.7L854.0 422.6Q850.5 438.0 859.0 453.0L803.5 449.5Z" fill="url(#fang)" stroke="#2a1c04" stroke-width="0.700"/>
<path d="M803.5 449.5L859.0 453.0Q856.5 469.0 854.0 485.0L798.4 466.0Z" fill="#7a4800" stroke="#2a1c04" stroke-width="0.700"/>
<path d="M798.4 466.0L854.0 485.0Q841.5 497.5 829.0 510.0L788.0 477.0Z" fill="#7a4800" stroke="#2a1c04" stroke-width="0.700"/>
<path d="M803.0 437.0L825.0 434.0L822.0 446.0L803.5 448.0Z" fill="#8a5200" opacity="0.850"/>
<path d="M775.5 476.5L806.0 528.0L770.0 540.0L730.0 532.0L690.0 518.0L665.0 495.0L660.0 460.0L702.9 451.8L712.8 467.4L733.8 479.5L755.0 481.7Z" fill="#f89808"/>
<path d="M699.5 438.0L642.0 431.7L642.8 424.7L700.3 431.0Z" fill="#ffd614" stroke="#2a1c04" stroke-width="0.800"/>
<path d="M703.0 421.5L651.0 402.5L653.2 396.4L705.2 415.4Z" fill="#ffd614" stroke="#2a1c04" stroke-width="0.800"/>
<path d="M712.0 407.6L671.5 377.0L675.1 372.2L715.6 402.8Z" fill="#ffd614" stroke="#2a1c04" stroke-width="0.800"/>
<path d="M728.6 401.0L700.7 362.0L705.2 358.8L733.1 397.8Z" fill="#ffd614" stroke="#2a1c04" stroke-width="0.800"/>
<path d="M745.0 398.7L737.5 354.0L742.9 353.1L750.4 397.8Z" fill="#ffd614" stroke="#2a1c04" stroke-width="0.800"/>
<path d="M764.0 400.0L775.6 358.0L780.9 359.5L769.3 401.5Z" fill="#ffd614" stroke="#2a1c04" stroke-width="0.800"/>
<path d="M780.7 407.6L806.4 370.6L811.3 374.0L785.6 411.0Z" fill="#ffd614" stroke="#2a1c04" stroke-width="0.800"/>
<path d="M793.4 419.0L836.0 394.5L839.0 399.7L796.4 424.2Z" fill="#ffd614" stroke="#2a1c04" stroke-width="0.800"/>
<path d="M801.0 431.7L854.0 422.6L855.0 428.5L802.0 437.6Z" fill="#ffd614" stroke="#2a1c04" stroke-width="0.800"/>
<path d="M803.5 449.5L859.0 453.0L858.6 460.0L803.1 456.5Z" fill="#ffd614" stroke="#2a1c04" stroke-width="0.800"/>
<path d="M798.4 466.0L854.0 485.0L851.9 491.2L796.3 472.2Z" fill="#ffd614" stroke="#2a1c04" stroke-width="0.800"/>
<path d="M772.0 485.7L780.0 483.7L806.0 526.0L800.4 531.0Z" fill="#ffd614" stroke="#2a1c04" stroke-width="0.800"/>
<path d="M753.7 487.7L766.0 486.7L770.0 535.4L761.8 537.5Z" fill="#ffd614" stroke="#2a1c04" stroke-width="0.800"/>
<path d="M736.0 485.0L744.0 486.0L737.0 530.0L730.0 528.0Z" fill="#ffd614" stroke="#2a1c04" stroke-width="0.800"/>
<path d="M721.0 479.6L729.0 483.7L698.0 518.0L690.8 513.0Z" fill="#ffd614" stroke="#2a1c04" stroke-width="0.800"/>
<path d="M706.0 466.0L710.0 472.0L672.0 497.0L668.0 491.0Z" fill="#ffd614" stroke="#2a1c04" stroke-width="0.800"/>
<path d="M701.0 449.0L668.4 457.3L668.4 463.0L701.0 455.5Z" fill="#ffd614" stroke="#2a1c04" stroke-width="0.800"/>
<ellipse cx="750.7" cy="441.3" rx="49.5" ry="40.6" transform="rotate(-4 750.7 441.3)" fill="#ffd412" stroke="#2a1c04" stroke-width="0.700"/>
<ellipse cx="751.500" cy="443.600" rx="18" ry="14.600" fill="url(#hole)" stroke="#2a1c04" stroke-width="0.700"/></g><!--impfan-E--><!--imptriad-S--><g clip-path="url(#vc)" stroke-linejoin="round" stroke-linecap="round">
<defs><linearGradient id="gold" x1="0" x2="1"><stop offset="0" stop-color="#f0d878"/><stop offset="0.500" stop-color="#d4b040"/><stop offset="1" stop-color="#8a6a18"/></linearGradient>
<radialGradient id="ball" cx="0.350" cy="0.300" r="0.800"><stop offset="0" stop-color="#ffb060"/><stop offset="0.600" stop-color="#e87010"/><stop offset="1" stop-color="#a84800"/></radialGradient></defs>
<path d="M686 452L702 465L714.600 446.600L727 458M686 452L676 470M760 478L776 452L782 462" fill="none" stroke="#c8c8c8" stroke-width="0.800"/>
<path d="M672 520L732 497M672 545L736 510M703 560L735 520M677 482L740 480" fill="none" stroke="#b8a868" stroke-width="0.700"/>
<path d="M678.6 478.6C682.3 476.7 693.9 469.8 701.0 467.4C708.1 465.0 714.2 464.6 721.0 464.4C727.8 464.2 734.7 464.9 741.5 466.4C748.3 467.9 757.0 471.5 761.8 473.5C766.5 475.5 768.6 477.8 770.0 478.6" fill="none" stroke="#9a9a9a" stroke-width="5.0"/>
<path d="M678.6 478.6C682.3 476.7 693.9 469.8 701.0 467.4C708.1 465.0 714.2 464.6 721.0 464.4C727.8 464.2 734.7 464.9 741.5 466.4C748.3 467.9 757.0 471.5 761.8 473.5C766.5 475.5 768.6 477.8 770.0 478.6" fill="none" stroke="#dedede" stroke-width="4.0"/>
<path d="M678.6 478.6C682.3 476.7 693.9 469.8 701.0 467.4C708.1 465.0 714.2 464.6 721.0 464.4C727.8 464.2 734.7 464.9 741.5 466.4C748.3 467.9 757.0 471.5 761.8 473.5C766.5 475.5 768.6 477.8 770.0 478.6" fill="none" stroke="#fafafa" stroke-width="1.4"/>
<path d="M680.0 484.0C683.7 482.2 695.0 475.3 702.0 473.0C709.0 470.7 715.5 470.2 722.0 470.0C728.5 469.8 736.0 470.7 741.0 472.0C746.0 473.3 750.2 477.0 752.0 478.0" fill="none" stroke="#9a9a9a" stroke-width="4"/>
<path d="M680.0 484.0C683.7 482.2 695.0 475.3 702.0 473.0C709.0 470.7 715.5 470.2 722.0 470.0C728.5 469.8 736.0 470.7 741.0 472.0C746.0 473.3 750.2 477.0 752.0 478.0" fill="none" stroke="#dedede" stroke-width="3"/>
<path d="M680.0 484.0C683.7 482.2 695.0 475.3 702.0 473.0C709.0 470.7 715.5 470.2 722.0 470.0C728.5 469.8 736.0 470.7 741.0 472.0C746.0 473.3 750.2 477.0 752.0 478.0" fill="none" stroke="#fafafa" stroke-width="1.0"/>
<path d="M753.7 470.5C755.8 469.3 762.5 464.1 766.0 463.4C769.5 462.7 773.7 464.2 775.0 466.4C776.3 468.6 774.2 474.8 774.0 476.5" fill="none" stroke="#9a9a9a" stroke-width="4"/>
<path d="M753.7 470.5C755.8 469.3 762.5 464.1 766.0 463.4C769.5 462.7 773.7 464.2 775.0 466.4C776.3 468.6 774.2 474.8 774.0 476.5" fill="none" stroke="#dedede" stroke-width="3"/>
<path d="M753.7 470.5C755.8 469.3 762.5 464.1 766.0 463.4C769.5 462.7 773.7 464.2 775.0 466.4C776.3 468.6 774.2 474.8 774.0 476.5" fill="none" stroke="#fafafa" stroke-width="1.0"/>
<path d="M678.6 487.7C682.7 490.5 694.9 498.9 703.0 504.5C711.1 510.1 723.0 518.2 727.0 521.0" fill="none" stroke="#9a9a9a" stroke-width="4.4"/>
<path d="M678.6 487.7C682.7 490.5 694.9 498.9 703.0 504.5C711.1 510.1 723.0 518.2 727.0 521.0" fill="none" stroke="#dedede" stroke-width="3.4"/>
<path d="M678.6 487.7C682.7 490.5 694.9 498.9 703.0 504.5C711.1 510.1 723.0 518.2 727.0 521.0" fill="none" stroke="#fafafa" stroke-width="1.2"/>
<path d="M739.5 503.0C739.8 500.5 740.8 492.8 741.5 488.0C742.2 483.2 743.2 476.8 743.5 474.5" fill="none" stroke="#9a9a9a" stroke-width="4.4"/>
<path d="M739.5 503.0C739.8 500.5 740.8 492.8 741.5 488.0C742.2 483.2 743.2 476.8 743.5 474.5" fill="none" stroke="#dedede" stroke-width="3.4"/>
<path d="M739.5 503.0C739.8 500.5 740.8 492.8 741.5 488.0C742.2 483.2 743.2 476.8 743.5 474.5" fill="none" stroke="#fafafa" stroke-width="1.2"/>
<path d="M731.4 523.2C735.7 518.5 748.2 504.5 757.0 495.0C765.8 485.5 779.5 471.2 784.0 466.4" fill="none" stroke="#9a9a9a" stroke-width="4.2"/>
<path d="M731.4 523.2C735.7 518.5 748.2 504.5 757.0 495.0C765.8 485.5 779.5 471.2 784.0 466.4" fill="none" stroke="#dedede" stroke-width="3.2"/>
<path d="M731.4 523.2C735.7 518.5 748.2 504.5 757.0 495.0C765.8 485.5 779.5 471.2 784.0 466.4" fill="none" stroke="#fafafa" stroke-width="1.1"/>
<path d="M746.600 456.500L751.500 472Q745.500 475.500 739 472Z" fill="url(#gold)" stroke="#6a5010" stroke-width="0.400"/>
<path d="M802.400 446L790.800 468Q784 467 781 460Z" fill="url(#gold)" stroke="#6a5010" stroke-width="0.400"/>
<path d="M751.3 477.85L756.8 475.1L762.3 478.40000000000003L762.3 483.35L756.8 486.1L751.3 482.8Z" fill="#c8aa48" stroke="#6a5010" stroke-width="0.400"/>
<path d="M751.3 477.85L756.8 475.1L762.3 478.40000000000003L756.8 480.6Z" fill="#ecd684"/>
<path d="M756.8 480.6L762.3 478.40000000000003L762.3 483.35L756.8 486.1Z" fill="#9a7c28"/>
<path d="M733.3 500.4L738.5 497.8L743.7 500.92L743.7 505.6L738.5 508.2L733.3 505.08Z" fill="#c8aa48" stroke="#6a5010" stroke-width="0.400"/>
<path d="M733.3 500.4L738.5 497.8L743.7 500.92L738.5 503Z" fill="#ecd684"/>
<path d="M738.5 503L743.7 500.92L743.7 505.6L738.5 508.2Z" fill="#9a7c28"/>
<path d="M745.5 498.4L750.7 495.8L755.9000000000001 498.92L755.9000000000001 503.6L750.7 506.2L745.5 503.08Z" fill="#c8aa48" stroke="#6a5010" stroke-width="0.400"/>
<path d="M745.5 498.4L750.7 495.8L755.9000000000001 498.92L750.7 501Z" fill="#ecd684"/>
<path d="M750.7 501L755.9000000000001 498.92L755.9000000000001 503.6L750.7 506.2Z" fill="#9a7c28"/>
<circle cx="732.400" cy="524.600" r="5.600" fill="url(#ball)" stroke="#7a3800" stroke-width="0.400"/>
<text x="646" y="462" font-size="12" fill="#2aa02a" font-family="Liberation Sans, sans-serif" opacity="0.800">YM</text>
<text x="727" y="465" font-size="12" fill="#2030e0" font-family="Liberation Sans, sans-serif" opacity="0.800">ZM</text>
<text x="739" y="454" font-size="12.5" fill="#e02030" font-family="Liberation Sans, sans-serif" opacity="0.800">XC</text>
<text x="746" y="448" font-size="11" fill="#2030e0" font-family="Liberation Sans, sans-serif" opacity="0.800">ZC</text>
<text x="772" y="455" font-size="12" fill="#d83030" font-family="Liberation Sans, sans-serif" opacity="0.800">XM</text>
<text x="797" y="444" font-size="12.5" fill="#2a9a2a" font-family="Liberation Sans, sans-serif" opacity="0.800">YC</text>
<rect x="641.5" y="466.5" width="36" height="28" fill="#f0f0f0" stroke="#c4c4c4" stroke-width="1"/>
<rect x="644" y="469.5" width="1.500" height="1.500" fill="#b8b8b8"/><rect x="648" y="469.5" width="1.500" height="1.500" fill="#b8b8b8"/>
<rect x="644" y="472.5" width="1.500" height="1.500" fill="#b8b8b8"/><rect x="648" y="472.5" width="1.500" height="1.500" fill="#b8b8b8"/>
<rect x="644" y="475.5" width="1.500" height="1.500" fill="#b8b8b8"/><rect x="648" y="475.5" width="1.500" height="1.500" fill="#b8b8b8"/>
<rect x="644" y="478.5" width="1.500" height="1.500" fill="#b8b8b8"/><rect x="648" y="478.5" width="1.500" height="1.500" fill="#b8b8b8"/>
<rect x="644" y="481.5" width="1.500" height="1.500" fill="#b8b8b8"/><rect x="648" y="481.5" width="1.500" height="1.500" fill="#b8b8b8"/>
<rect x="644" y="484.5" width="1.500" height="1.500" fill="#b8b8b8"/><rect x="648" y="484.5" width="1.500" height="1.500" fill="#b8b8b8"/>
<rect x="644" y="487.5" width="1.500" height="1.500" fill="#b8b8b8"/><rect x="648" y="487.5" width="1.500" height="1.500" fill="#b8b8b8"/>
<text x="660" y="484.5" font-size="12.500" fill="#111" font-family="Liberation Sans, sans-serif">R3</text>
<rect x="636.5" y="506.5" width="36" height="28" fill="#f0f0f0" stroke="#c4c4c4" stroke-width="1"/>
<rect x="639" y="509.5" width="1.500" height="1.500" fill="#b8b8b8"/><rect x="643" y="509.5" width="1.500" height="1.500" fill="#b8b8b8"/>
<rect x="639" y="512.5" width="1.500" height="1.500" fill="#b8b8b8"/><rect x="643" y="512.5" width="1.500" height="1.500" fill="#b8b8b8"/>
<rect x="639" y="515.5" width="1.500" height="1.500" fill="#b8b8b8"/><rect x="643" y="515.5" width="1.500" height="1.500" fill="#b8b8b8"/>
<rect x="639" y="518.5" width="1.500" height="1.500" fill="#b8b8b8"/><rect x="643" y="518.5" width="1.500" height="1.500" fill="#b8b8b8"/>
<rect x="639" y="521.5" width="1.500" height="1.500" fill="#b8b8b8"/><rect x="643" y="521.5" width="1.500" height="1.500" fill="#b8b8b8"/>
<rect x="639" y="524.5" width="1.500" height="1.500" fill="#b8b8b8"/><rect x="643" y="524.5" width="1.500" height="1.500" fill="#b8b8b8"/>
<rect x="639" y="527.5" width="1.500" height="1.500" fill="#b8b8b8"/><rect x="643" y="527.5" width="1.500" height="1.500" fill="#b8b8b8"/>
<text x="654.5" y="524.5" font-size="12.500" fill="#111" font-family="Liberation Sans, sans-serif">R2</text>
<rect x="636.5" y="534.5" width="36" height="24" fill="#f0f0f0" stroke="#c4c4c4" stroke-width="1"/>
<rect x="639" y="537.5" width="1.500" height="1.500" fill="#b8b8b8"/><rect x="643" y="537.5" width="1.500" height="1.500" fill="#b8b8b8"/>
<rect x="639" y="540.5" width="1.500" height="1.500" fill="#b8b8b8"/><rect x="643" y="540.5" width="1.500" height="1.500" fill="#b8b8b8"/>
<rect x="639" y="543.5" width="1.500" height="1.500" fill="#b8b8b8"/><rect x="643" y="543.5" width="1.500" height="1.500" fill="#b8b8b8"/>
<rect x="639" y="546.5" width="1.500" height="1.500" fill="#b8b8b8"/><rect x="643" y="546.5" width="1.500" height="1.500" fill="#b8b8b8"/>
<rect x="639" y="549.5" width="1.500" height="1.500" fill="#b8b8b8"/><rect x="643" y="549.5" width="1.500" height="1.500" fill="#b8b8b8"/>
<rect x="639" y="552.5" width="1.500" height="1.500" fill="#b8b8b8"/><rect x="643" y="552.5" width="1.500" height="1.500" fill="#b8b8b8"/>
<text x="654.5" y="550.5" font-size="12.500" fill="#111" font-family="Liberation Sans, sans-serif">R4</text>
<rect x="636.5" y="557.5" width="67" height="27" fill="#f0f0f0" stroke="#c4c4c4" stroke-width="1"/>
<rect x="639" y="560.5" width="1.500" height="1.500" fill="#b8b8b8"/><rect x="643" y="560.5" width="1.500" height="1.500" fill="#b8b8b8"/>
<rect x="639" y="563.5" width="1.500" height="1.500" fill="#b8b8b8"/><rect x="643" y="563.5" width="1.500" height="1.500" fill="#b8b8b8"/>
<rect x="639" y="566.5" width="1.500" height="1.500" fill="#b8b8b8"/><rect x="643" y="566.5" width="1.500" height="1.500" fill="#b8b8b8"/>
<rect x="639" y="569.5" width="1.500" height="1.500" fill="#b8b8b8"/><rect x="643" y="569.5" width="1.500" height="1.500" fill="#b8b8b8"/>
<rect x="639" y="572.5" width="1.500" height="1.500" fill="#b8b8b8"/><rect x="643" y="572.5" width="1.500" height="1.500" fill="#b8b8b8"/>
<rect x="639" y="575.5" width="1.500" height="1.500" fill="#b8b8b8"/><rect x="643" y="575.5" width="1.500" height="1.500" fill="#b8b8b8"/>
<rect x="639" y="578.5" width="1.500" height="1.500" fill="#b8b8b8"/><rect x="643" y="578.5" width="1.500" height="1.500" fill="#b8b8b8"/>
<text x="654.5" y="575.0" font-size="12.500" fill="#111" textLength="45.500" lengthAdjust="spacingAndGlyphs" font-family="Liberation Sans, sans-serif">R1_P3_0</text></g><!--imptriad-E--></svg>
<div class="hl" style="left:640px;top:761px;width:740px;background:#b0b0b0"></div>
</div>

<!-- STATUS -->
<div id="status">
<div class="hl" style="left:6px;top:762px;width:307px;background:#a5a5a5"></div>
<div class="t cj" style="left:9px;top:766px;font-size:11.1px;font-weight:bold;color:#111">为直接输入选择或是拖动手柄;&nbsp; 使用 Alt 键来关闭对齐功能</div>
<svg class="a" style="left:1309px;top:764px" width="16" height="16" viewBox="0 0 16 16"><path d="M1 4V1h3M12 1h3v3M15 12v3h-3M4 15H1v-3" fill="none" stroke="#888" stroke-width="1"/><rect x="3.5" y="3.500" width="9" height="9" fill="#dfe8f4" stroke="#667" stroke-width="1"/><rect x="5" y="6" width="6" height="5" fill="#3b6fc4"/></svg>
</div>

<!-- DIALOG placeholder -->
<div id="dlg">
<div class="a" style="left:312px;top:0;width:328px;height:788px;background:#f0f0f0"></div>
<div class="a" style="left:312px;top:0;width:328px;height:22px;background:#529eb8"></div>
<svg class="a" style="left:318px;top:3px" width="16" height="16" viewBox="-8 -8 16 16"><g fill="#fff"><circle r="5.400"/><rect x="-1.700" y="-7.300" width="3.400" height="14.600"/><rect x="-1.700" y="-7.300" width="3.400" height="14.600" transform="rotate(45)"/><rect x="-1.700" y="-7.300" width="3.400" height="14.600" transform="rotate(90)"/><rect x="-1.700" y="-7.300" width="3.400" height="14.600" transform="rotate(135)"/></g><circle r="3.300" fill="#529eb8"/><circle r="1.500" fill="#fff"/></svg>
<div class="t cj" style="left:341px;top:3px;font-size:14px;color:#fff">车刀-标准</div>
<svg class="a" style="left:618px;top:4px" width="13" height="13" viewBox="0 0 13 13"><path d="M1.500 1.500L11.500 11.500M11.500 1.500L1.500 11.500" stroke="#fff" stroke-width="1.700" fill="none"/></svg>
<!-- tabs -->
<div class="a" style="left:378px;top:33px;width:50px;height:29px;background:#f0f0f0;border:1px solid #cfcfcf"></div>
<div class="a" style="left:428px;top:33px;width:53px;height:29px;background:#f0f0f0;border:1px solid #cfcfcf;border-left:none"></div>
<div class="a" style="left:481px;top:33px;width:51px;height:29px;background:#f0f0f0;border:1px solid #cfcfcf;border-left:none"></div>
<div class="a" style="left:322px;top:755px;width:308px;height:40px;background:#fff"></div>
<div class="a" style="left:322px;top:61px;width:308px;height:695px;background:#fff;border:1px solid #bdbdbd"></div>
<div class="a" style="left:322px;top:31px;width:56px;height:32px;background:#fff;border:1px solid #c4c4c4;border-bottom:none"></div>
<div class="t cj" style="left:338px;top:40px;font-size:12.5px">工具</div>
<div class="t cj" style="left:385px;top:41px;font-size:12.5px">夹持器</div>
<div class="t cj" style="left:443px;top:41px;font-size:12.5px">跟踪</div>
<div class="t cj" style="left:494px;top:41px;font-size:12.5px">更多</div>
<!-- 刀片 -->
<div class="sec cj" style="top:69px">刀片</div><svg class="a" style="left:608px;top:72px" width="12" height="9" viewBox="0 0 12 9"><path d="M1.300 7.800L6 2L10.700 7.800" fill="none" stroke="#0b6b96" stroke-width="1.900"/></svg>
<div class="lbl cj" style="top:100px">ISO 刀片形状</div>
<div class="box" style="left:475px;top:94px;width:141px;height:24px"></div>
<div class="t cj" style="left:480px;top:100px;font-size:12px">C (菱形 80)</div>
<div class="dd big" style="left:602px;top:105px"></div>
<div class="lbl cj" style="top:126px">刀片位置</div>
<div class="box" style="left:475px;top:121px;width:141px;height:25px"></div>
<svg class="a" style="left:480px;top:126px" width="16" height="15" viewBox="0 0 16 15"><path d="M5 1h9v9l-2 3h-7z" fill="#4a4a4a"/><path d="M5 1h7v10h-7z" fill="#7a7a7a"/><path d="M1 6l6-1v6l-5 3z" fill="#f2c31d" stroke="#7a5a00" stroke-width="0.700"/><circle cx="4.300" cy="9" r="1" fill="#7a5a00"/></svg>
<div class="t cj" style="left:500px;top:126px;font-size:12px">顶侧</div>
<div class="dd big" style="left:602px;top:132px"></div>
<div class="hl" style="left:327px;top:155px;width:298px;height:2px;background:#dadada"></div>
<div class="sec cj" style="top:164px">图例</div><svg class="a" style="left:608px;top:167px" width="12" height="9" viewBox="0 0 12 9"><path d="M1.300 7.800L6 2L10.700 7.800" fill="none" stroke="#0b6b96" stroke-width="1.900"/></svg>
<svg id="legend" class="a" style="left:405px;top:188px" width="150" height="100" viewBox="405 188 150 100"><!--legendbody-S--><defs><pattern id="dots" width="2" height="2" patternUnits="userSpaceOnUse"><rect width="2" height="2" fill="#ffff66"/><rect width="1" height="1" fill="#ffffc8"/><rect x="1" y="1" width="1" height="1" fill="#ffffc8"/></pattern></defs>
<path d="M448.500 199.800L505 196.300Q512 196 511.800 203L508.600 259.500Q508.200 266 501.500 266.600L444.500 270.300Q436.800 270.800 437.200 263.500L441.300 207Q441.800 200.300 448.500 199.800Z" fill="url(#dots)" stroke="#000" stroke-width="2"/>
<circle cx="474.400" cy="233.200" r="9.300" fill="#fff" stroke="#000" stroke-width="1.800"/>
<g stroke="#8b0a0a" stroke-width="1" fill="none"><path d="M424.400 279.700h4.200l8-8.400"/><path d="M505.400 266h20.500M468.400 271.600h57.500M521.700 256v10M521.700 271.600v10"/></g>
<g fill="#8b0a0a"><path d="M438.500 269.400l-4.800 1.600l3 3z"/><path d="M521.700 266l-1.800-4.500h3.600z"/><path d="M521.700 271.600l-1.800 4.500h3.600z"/></g>
<text x="413.500" y="284.200" font-size="11.500" font-weight="bold" fill="#8b0a0a" font-family="Liberation Sans, sans-serif">R</text>
<text x="528.500" y="271.800" font-size="11" font-weight="bold" fill="#8b0a0a" font-family="Liberation Sans, sans-serif">OA</text><!--legendbody-E--></svg>
<div class="hl" style="left:327px;top:297px;width:298px;height:2px;background:#dadada"></div>
<div class="sec cj" style="top:306px">尺寸</div><svg class="a" style="left:608px;top:309px" width="12" height="9" viewBox="0 0 12 9"><path d="M1.300 7.800L6 2L10.700 7.800" fill="none" stroke="#0b6b96" stroke-width="1.900"/></svg>
<div class="lbl cj" style="top:334px">刀尖角度</div>
<div class="t la" style="left:592px;top:334px;font-size:12px">80.0</div>
<div class="lbl cj" style="top:359px">(R) 刀尖半径</div>
<div class="box" style="left:534px;top:354px;width:82px;height:23px"></div>
<div class="a" style="left:539px;top:357px;width:73px;height:17px;background:#0a74d6"></div>
<div class="a" style="left:538px;top:357px;width:1px;height:17px;background:#f08a1a"></div>
<div class="a" style="left:536px;top:356px;width:76px;height:19px;overflow:hidden"><div class="num" style="left:20.500px;top:2px;color:#fff">0<i>.</i>30000</div></div>
<div class="lbl cj" style="top:384px">(OA) 方向角度</div>
<div class="box" style="left:534px;top:379px;width:82px;height:23px"></div>
<div class="a" style="left:536px;top:381px;width:76px;height:19px;overflow:hidden"><div class="num" style="left:20.500px;top:2px;color:#111">5<i>.</i>00000</div></div>
<div class="hl" style="left:327px;top:410px;width:298px;height:2px;background:#dadada"></div>
<div class="sec cj" style="top:419px">刀片尺寸</div><svg class="a" style="left:608px;top:422px" width="12" height="9" viewBox="0 0 12 9"><path d="M1.300 7.800L6 2L10.700 7.800" fill="none" stroke="#0b6b96" stroke-width="1.900"/></svg>
<div class="lbl cj" style="top:449px">测量</div>
<div class="box" style="left:475px;top:444px;width:141px;height:24px"></div>
<div class="t cj" style="left:480px;top:449px;font-size:12px">切削边</div>
<div class="dd big" style="left:602px;top:455px"></div>
<div class="lbl cj" style="top:475px">长度</div>
<div class="box" style="left:534px;top:471px;width:82px;height:23px"></div>
<div class="a" style="left:536px;top:473px;width:76px;height:19px;overflow:hidden"><div class="num" style="left:11.500px;top:2px;color:#111">15<i>.</i>00000</div></div>
<div class="hl" style="left:327px;top:502px;width:298px;height:2px;background:#dadada"></div>
<div class="sec cj" style="top:510px">更多</div><svg class="a" style="left:608px;top:513px" width="12" height="9" viewBox="0 0 12 9"><path d="M1.300 1.200L6 7L10.700 1.200" fill="none" stroke="#0b6b96" stroke-width="1.900"/></svg>
<div class="hl" style="left:327px;top:529px;width:298px;height:2px;background:#dadada"></div>
<div class="sec cj" style="top:538px">描述</div><svg class="a" style="left:608px;top:541px" width="12" height="9" viewBox="0 0 12 9"><path d="M1.300 7.800L6 2L10.700 7.800" fill="none" stroke="#0b6b96" stroke-width="1.900"/></svg>
<div class="box" style="left:338px;top:563px;width:278px;height:23px"></div>
<div class="lbl cj" style="top:597px">材料 : CARBIDE</div>
<div class="box" style="left:584px;top:588px;width:32px;height:32px;background:#f4f4f4"></div>
<svg id="wrench" class="a" style="left:587px;top:591px" width="26" height="26" viewBox="0 0 26 26"><!--wrenchbody-S--><defs><linearGradient id="wg" x1="0" y1="0" x2="1" y2="1"><stop offset="0" stop-color="#fff0a0"/><stop offset="0.500" stop-color="#f4c830"/><stop offset="1" stop-color="#c08a10"/></linearGradient></defs>
<path d="M4 23.500q-2.500-2.500 0-5l8-7q-1.500-5 2-8q3-2.500 7-1.500l-4.500 4.500l1 3.500l3.500 1l4.500-4.500q1 4-1.500 7q-3 3.500-8 2l-7 8q-2.500 2.500-5 0z" fill="url(#wg)" stroke="#8a6408" stroke-width="0.900"/><circle cx="6" cy="21.500" r="1.200" fill="#fff8d0" stroke="#8a6408" stroke-width="0.500"/><!--wrenchbody-E--></svg>
<div class="hl" style="left:327px;top:628px;width:298px;height:2px;background:#dadada"></div>
<div class="sec cj" style="top:637px">编号</div><svg class="a" style="left:608px;top:640px" width="12" height="9" viewBox="0 0 12 9"><path d="M1.300 7.800L6 2L10.700 7.800" fill="none" stroke="#0b6b96" stroke-width="1.900"/></svg>
<div class="lbl cj" style="top:667px">刀具号</div>
<div class="box" style="left:534px;top:662px;width:82px;height:23px"></div>
<div class="num" style="left:600px;top:665px;color:#111">0</div>
<div class="hl" style="left:327px;top:693px;width:298px;height:2px;background:#dadada"></div>
<div class="sec cj" style="top:702px">信息</div><svg class="a" style="left:608px;top:705px" width="12" height="9" viewBox="0 0 12 9"><path d="M1.300 1.200L6 7L10.700 1.200" fill="none" stroke="#0b6b96" stroke-width="1.900"/></svg>
<div class="hl" style="left:327px;top:719px;width:298px;height:2px;background:#dadada"></div>
<div class="sec cj" style="top:729px">库</div><svg class="a" style="left:608px;top:732px" width="12" height="9" viewBox="0 0 12 9"><path d="M1.300 1.200L6 7L10.700 1.200" fill="none" stroke="#0b6b96" stroke-width="1.900"/></svg>
<div class="hl" style="left:327px;top:746px;width:298px;height:2px;background:#dadada"></div>
<div class="sec cj" style="left:329px;top:761px">预览</div><svg class="a" style="left:612px;top:764px" width="12" height="9" viewBox="0 0 12 9"><path d="M1.300 7.800L6 2L10.700 7.800" fill="none" stroke="#0b6b96" stroke-width="1.900"/></svg>
<div class="box" style="left:588px;top:786px;width:33px;height:10px;background:#f4f4f4"></div>
</div>
</body>
</html>
